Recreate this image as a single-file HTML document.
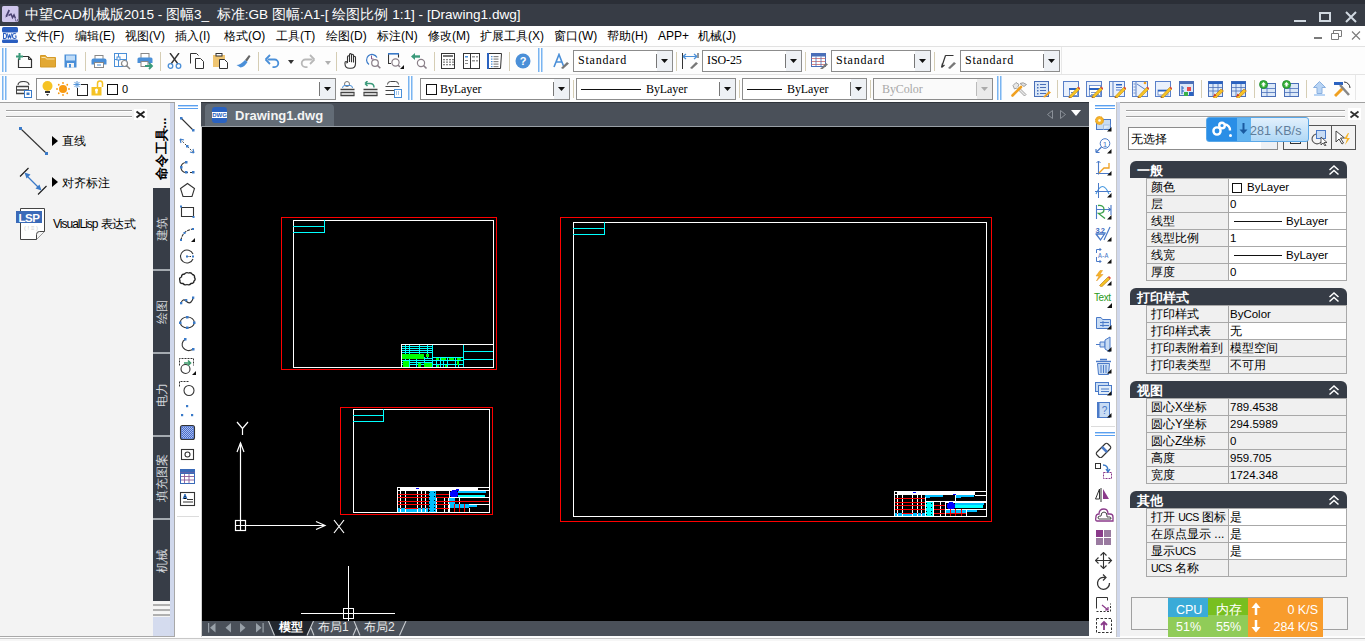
<!DOCTYPE html>
<html><head><meta charset="utf-8">
<style>
*{box-sizing:border-box;margin:0;padding:0}
html,body{width:1365px;height:641px;overflow:hidden;background:#f0f0f0;font-family:"Liberation Sans",sans-serif;font-size:12px;color:#000}
.a{position:absolute}
.tt{color:#fff;font-size:13.6px;white-space:nowrap;line-height:16px}
.tbf{font-family:"Liberation Serif",serif;font-size:12px;line-height:21px;letter-spacing:0.8px;white-space:nowrap}
.tbs{font-family:"Liberation Serif",serif;font-size:12px;line-height:23px;letter-spacing:-0.1px;white-space:nowrap}
.lpt{font-size:12px;line-height:16px;white-space:nowrap}
.vt{background:#373d47;overflow:hidden}
.vt span{position:absolute;left:50%;top:50%;transform:translate(-50%,-50%) rotate(-90deg);white-space:nowrap;color:#d4d8dc;font-size:12px;line-height:14px}
.vt.act{background:transparent}
.vt.act span{color:#000;font-weight:bold;font-size:13px;top:calc(50% + 3px)}
.pk{font-size:12px;line-height:18px;white-space:nowrap}
.pv{font-size:11.5px;line-height:18px;white-space:nowrap}
.cw{font-size:12.5px;line-height:16px;color:#fff;white-space:nowrap}
.u{font-size:10.5px;letter-spacing:-0.6px}
.mn{top:28px;font-size:12px;line-height:16px;white-space:nowrap;color:#000}
</style></head><body>
<!-- TITLE BAR -->
<div class="a" style="left:0;top:0;width:1365px;height:26px;background:#373c45;border-top:4px solid #2b2f37"></div>
<svg class="a" style="left:2px;top:6px" width="17" height="16" viewBox="0 0 17 16">
 <rect x="0" y="0" width="16.5" height="16" rx="1.5" fill="#cfc6ec"/>
 <path d="M6.5 3.5L8 4.5L5 11L3.5 10z" fill="#4a4272"/><path d="M3 11.5l1.5-2 1 1z" fill="#4a4272"/>
 <path d="M6.5 9.5L9 8L10.5 11.5L12 9L13.5 12.5" stroke="#4a4272" stroke-width="1.5" fill="none"/>
 <path d="M13.5 13v2h2v-2" stroke="#6a6290" stroke-width="0.8" fill="none"/>
</svg>
<div class="a tt" style="left:25px;top:7px;">中望CAD机械版2015 - 图幅3_ &nbsp;标准:GB 图幅:A1-[ 绘图比例 1:1] - [Drawing1.dwg]</div>
<div class="a" style="left:1294px;top:20px;width:12px;height:2px;background:#d0d8e0"></div>
<div class="a" style="left:1319px;top:12px;width:12px;height:10px;border:2px solid #d0d8e0"></div>
<svg class="a" style="left:1345px;top:11px" width="12" height="12" viewBox="0 0 12 12"><path d="M1 1L11 11M11 1L1 11" stroke="#d0d8e0" stroke-width="2"/></svg>
<!-- MENU -->
<div class="a" style="left:0;top:26px;width:1365px;height:21px;background:#fff;border-bottom:1px solid #e2e2e2"></div>
<svg class="a" style="left:2px;top:27px" width="16" height="16" viewBox="0 0 16 16">
 <rect x="0" y="0" width="16" height="5.5" rx="1.5" fill="#2a5ec0"/>
 <rect x="0" y="12.5" width="16" height="3.5" rx="1.2" fill="#2a5ec0"/>
 <path d="M1.5 6.5v5h1.5q1.5 0 1.5-2.5t-1.5-2.5z M5.5 6.5l0.8 5 1.2-3.5 1.2 3.5 0.8-5 M14 7q-0.5-0.5-1.5-0.5q-2 0-2 2.5t2 2.5q1 0 1.5-0.5v-2h-1.2" stroke="#2a5ec0" stroke-width="1.05" fill="none"/>
</svg>
<div class="a mn" style="left:25px">文件(F)</div>
<div class="a mn" style="left:75px">编辑(E)</div>
<div class="a mn" style="left:125px">视图(V)</div>
<div class="a mn" style="left:175px">插入(I)</div>
<div class="a mn" style="left:224px">格式(O)</div>
<div class="a mn" style="left:276px">工具(T)</div>
<div class="a mn" style="left:326px">绘图(D)</div>
<div class="a mn" style="left:377px">标注(N)</div>
<div class="a mn" style="left:428px">修改(M)</div>
<div class="a mn" style="left:480px">扩展工具(X)</div>
<div class="a mn" style="left:554px">窗口(W)</div>
<div class="a mn" style="left:607px">帮助(H)</div>
<div class="a mn" style="left:658px">APP+</div>
<div class="a mn" style="left:698px">机械(J)</div>
<div class="a" style="left:1314px;top:37px;width:8px;height:2px;background:#7a7a7a"></div>
<svg class="a" style="left:1331px;top:30px" width="11" height="10" viewBox="0 0 11 10"><path d="M0.5 3.5h7v6h-7z M2.5 3.5v-3h8v6h-3" stroke="#7a7a7a" fill="none"/></svg>
<svg class="a" style="left:1351px;top:31px" width="10" height="9" viewBox="0 0 10 9"><path d="M1 0.5L9 8.5M9 0.5L1 8.5" stroke="#7a7a7a" stroke-width="1.1"/></svg>
<div class="a" style="left:0px;top:47px;width:1365px;height:27px;background:#fdfdfd;"></div>
<div class="a" style="left:0px;top:74px;width:1365px;height:1px;background:#e4e4e4;"></div>
<div class="a" style="left:0px;top:75px;width:1365px;height:27px;background:#fdfdfd;"></div>
<div class="a" style="left:1061px;top:47px;width:1px;height:27px;background:#e8e8e8;"></div>
<div class="a" style="left:1355px;top:75px;width:1px;height:25px;background:#e8e8e8;"></div>
<div class="a" style="left:2px;top:48px;width:1px;height:24px;background:#7ab4f0;"></div>
<div class="a" style="left:5px;top:48px;width:1px;height:24px;background:#7ab4f0;"></div>
<div class="a" style="left:3px;top:48px;width:1px;height:24px;background:#b8d8f8;"></div>
<div class="a" style="left:6px;top:48px;width:1px;height:24px;background:#b8d8f8;"></div>
<div class="a" style="left:2px;top:76px;width:1px;height:24px;background:#7ab4f0;"></div>
<div class="a" style="left:5px;top:76px;width:1px;height:24px;background:#7ab4f0;"></div>
<div class="a" style="left:3px;top:76px;width:1px;height:24px;background:#b8d8f8;"></div>
<div class="a" style="left:6px;top:76px;width:1px;height:24px;background:#b8d8f8;"></div>
<div class="a" style="left:538px;top:48px;width:1px;height:24px;background:#7ab4f0;"></div>
<div class="a" style="left:541px;top:48px;width:1px;height:24px;background:#7ab4f0;"></div>
<div class="a" style="left:539px;top:48px;width:1px;height:24px;background:#b8d8f8;"></div>
<div class="a" style="left:542px;top:48px;width:1px;height:24px;background:#b8d8f8;"></div>
<div class="a" style="left:408px;top:76px;width:1px;height:24px;background:#7ab4f0;"></div>
<div class="a" style="left:411px;top:76px;width:1px;height:24px;background:#7ab4f0;"></div>
<div class="a" style="left:409px;top:76px;width:1px;height:24px;background:#b8d8f8;"></div>
<div class="a" style="left:412px;top:76px;width:1px;height:24px;background:#b8d8f8;"></div>
<div class="a" style="left:997px;top:76px;width:1px;height:24px;background:#7ab4f0;"></div>
<div class="a" style="left:1000px;top:76px;width:1px;height:24px;background:#7ab4f0;"></div>
<div class="a" style="left:998px;top:76px;width:1px;height:24px;background:#b8d8f8;"></div>
<div class="a" style="left:1001px;top:76px;width:1px;height:24px;background:#b8d8f8;"></div>
<div class="a" style="left:85px;top:52px;width:1px;height:19px;background:#d5cdb4;"></div>
<div class="a" style="left:160px;top:52px;width:1px;height:19px;background:#d5cdb4;"></div>
<div class="a" style="left:258px;top:52px;width:1px;height:19px;background:#d5cdb4;"></div>
<div class="a" style="left:336px;top:52px;width:1px;height:19px;background:#d5cdb4;"></div>
<div class="a" style="left:434px;top:52px;width:1px;height:19px;background:#d5cdb4;"></div>
<div class="a" style="left:509px;top:52px;width:1px;height:19px;background:#d5cdb4;"></div>
<div class="a" style="left:676px;top:52px;width:1px;height:19px;background:#d5cdb4;"></div>
<div class="a" style="left:805px;top:52px;width:1px;height:19px;background:#d5cdb4;"></div>
<div class="a" style="left:934px;top:52px;width:1px;height:19px;background:#d5cdb4;"></div>
<div class="a" style="left:573px;top:80px;width:1px;height:18px;background:#d5cdb4;"></div>
<div class="a" style="left:739px;top:80px;width:1px;height:18px;background:#d5cdb4;"></div>
<div class="a" style="left:870px;top:80px;width:1px;height:18px;background:#d5cdb4;"></div>
<div class="a" style="left:1057px;top:80px;width:1px;height:18px;background:#d5cdb4;"></div>
<div class="a" style="left:1201px;top:80px;width:1px;height:18px;background:#d5cdb4;"></div>
<div class="a" style="left:1254px;top:80px;width:1px;height:18px;background:#d5cdb4;"></div>
<div class="a" style="left:1306px;top:80px;width:1px;height:18px;background:#d5cdb4;"></div>
<svg class="a" style="left:16px;top:53px" width="17" height="16" viewBox="0 0 17 16"><path d="M2.5 5.5v9h13v-8l-3-3h-6" stroke="#333" fill="none" stroke-width="1.2"/><path d="M12.5 3.5v3h3" stroke="#333" fill="none"/><path d="M3.5 0v7M0 3.5h7" stroke="#3a9a7a" stroke-width="2"/></svg>
<svg class="a" style="left:40px;top:53px" width="16" height="16" viewBox="0 0 16 16"><path d="M0.5 2.5h5l1.5 2h8.5v9.5h-15z" fill="#e2a833" stroke="#d49a28"/><path d="M1.5 4.5h4l1 1.5h8" stroke="#fbe3a8" fill="none"/></svg>
<svg class="a" style="left:64px;top:54px" width="13" height="14" viewBox="0 0 13 14"><rect x="0.5" y="0.5" width="12" height="13" fill="#4a8fd8"/><rect x="2" y="1.5" width="9" height="5" fill="#bfdcf8"/><rect x="3" y="9" width="7" height="4.5" fill="#f4f4f4"/><rect x="5" y="10" width="2" height="3.5" fill="#4a8fd8"/></svg>
<svg class="a" style="left:91px;top:53px" width="16" height="16" viewBox="0 0 16 16"><rect x="4" y="2.5" width="8" height="4" fill="#fff" stroke="#888"/><path d="M0.5 7.5q0-2 2-2h11q2 0 2 2v4h-15z" fill="#4a8fd8"/><rect x="3.5" y="9.5" width="9" height="5" fill="#fff" stroke="#888"/><rect x="6" y="11.5" width="4" height="1" fill="#4a8fd8"/></svg>
<svg class="a" style="left:114px;top:53px" width="17" height="17" viewBox="0 0 17 17"><rect x="0.5" y="0.5" width="12" height="13" fill="none" stroke="#4a8fd8"/><path d="M4.5 0.5v13M0.5 6.5h12" stroke="#4a8fd8"/><rect x="3" y="4" width="3" height="3" fill="#fff" stroke="#4a8fd8"/><circle cx="10.5" cy="10.5" r="3" fill="#fff" stroke="#888" stroke-width="1.2"/><path d="M12.5 12.5l3.5 3.5" stroke="#888" stroke-width="1.5"/></svg>
<svg class="a" style="left:137px;top:53px" width="17" height="17" viewBox="0 0 17 17"><rect x="4" y="0.5" width="8" height="5" fill="#fff" stroke="#888"/><path d="M0.5 6q0-1.5 1.5-1.5h12q1.5 0 1.5 1.5v4h-15z" fill="#4a8fd8"/><rect x="4" y="8.5" width="7" height="5" fill="#fff" stroke="#888"/><path d="M8 13h7M12 10l3 3-3 3" stroke="#3a9a7a" stroke-width="1.8" fill="none"/></svg>
<svg class="a" style="left:167px;top:53px" width="15" height="16" viewBox="0 0 15 16"><path d="M3 0l8 11M12 0l-8 11" stroke="#333" stroke-width="1.4"/><circle cx="3.5" cy="13" r="2.3" fill="none" stroke="#4a8fd8" stroke-width="1.3"/><circle cx="11.5" cy="13" r="2.3" fill="none" stroke="#4a8fd8" stroke-width="1.3"/></svg>
<svg class="a" style="left:190px;top:53px" width="15" height="16" viewBox="0 0 15 16"><path d="M0.5 10.5v-10h6l2 2" fill="none" stroke="#333"/><path d="M5.5 5.5h5l3 3v7h-8z" fill="#fff" stroke="#333"/></svg>
<svg class="a" style="left:213px;top:53px" width="15" height="16" viewBox="0 0 15 16"><rect x="0" y="2" width="12" height="12" fill="#efc572"/><rect x="3" y="0.5" width="6" height="2.5" fill="#fff" stroke="#333"/><path d="M6.5 6.5h5l3 3v6h-8z" fill="#fff" stroke="#333"/></svg>
<svg class="a" style="left:236px;top:53px" width="15" height="16" viewBox="0 0 15 16"><path d="M9 7l4-5 1.5 1.2-3.5 5.3z" fill="#666"/><path d="M0.5 12q4 0 8.5-5l2.5 2q-3 5-7 5.5z" fill="#4a8fd8"/></svg>
<svg class="a" style="left:265px;top:53px" width="15" height="16" viewBox="0 0 15 16"><path d="M2.5 6.5h7a3.8 3.8 0 0 1 0 7.6h-2" stroke="#4a8fd8" stroke-width="1.8" fill="none"/><path d="M0.5 6.5l4.5-4.5M0.5 6.5l4.5 4.5" stroke="#4a8fd8" stroke-width="1.8"/></svg>
<svg class="a" style="left:288px;top:60px" width="6" height="4" viewBox="0 0 6 4"><path d="M0 0h6l-3 4z" fill="#333"/></svg>
<svg class="a" style="left:300px;top:53px" width="15" height="16" viewBox="0 0 15 16"><path d="M12.5 6.5h-7a3.8 3.8 0 0 0 0 7.6h2" stroke="#b8b8b8" stroke-width="1.8" fill="none"/><path d="M14.5 6.5l-4.5-4.5M14.5 6.5l-4.5 4.5" stroke="#b8b8b8" stroke-width="1.8"/></svg>
<svg class="a" style="left:325px;top:61px" width="6" height="4" viewBox="0 0 6 4"><path d="M0 0h6l-3 4z" fill="#b0b0b0"/></svg>
<svg class="a" style="left:344px;top:53px" width="14" height="16" viewBox="0 0 14 16"><path d="M3.5 9.5V4q0-1.2 1-1.2t1 1.2v5V1.8q0-1.2 1-1.2t1 1.2v7.5V2.5q0-1.2 1-1.2t1 1.2v7V4.5q0-1.2 1-1.2t1 1.2v6q0 4.8-4.5 4.8h-1.5q-4.5 0-4.5-4.5v-1q0-1.3 1-1.3t1 1.3z" fill="#fff" stroke="#333" stroke-width="1.1"/></svg>
<svg class="a" style="left:365px;top:53px" width="16" height="16" viewBox="0 0 16 16"><path d="M4 11.5A5.5 5.5 0 1 1 12 4.5" stroke="#3a7ac8" stroke-width="1.2" fill="none"/><path d="M6.5 2.5v3.5h2" stroke="#8a5a8a" stroke-width="1" fill="none"/><circle cx="10" cy="10" r="3.3" fill="#fff" stroke="#8a7f88" stroke-width="1.2"/><path d="M12.3 12.3l3 3" stroke="#8a7f88" stroke-width="1.6"/></svg>
<svg class="a" style="left:388px;top:53px" width="17" height="17" viewBox="0 0 17 17"><path d="M0.5 1v9.5h2.5M10.5 1v3.5" stroke="#333" fill="none" stroke-width="1.1"/><rect x="0" y="0" width="11" height="1.6" fill="#3a7ac8"/><circle cx="7.5" cy="9.5" r="3.6" fill="#fff" stroke="#8a7f88" stroke-width="1.2"/><path d="M10 12l2 2" stroke="#8a7f88" stroke-width="1.6"/><path d="M16 12v4h-4z" fill="#111"/></svg>
<svg class="a" style="left:411px;top:53px" width="17" height="17" viewBox="0 0 17 17"><path d="M3 3.5h6" stroke="#3a9a7a" stroke-width="2.4"/><path d="M0 3.5l4-3.5v7z" fill="#3a9a7a"/><circle cx="10" cy="10" r="3.6" fill="#fff" stroke="#8a7f88" stroke-width="1.2"/><path d="M12.5 12.5l3 3" stroke="#8a7f88" stroke-width="1.6"/></svg>
<svg class="a" style="left:441px;top:53px" width="14" height="16" viewBox="0 0 14 16"><rect x="0.5" y="0.5" width="13" height="15" fill="#fff" stroke="#333"/><rect x="2" y="2" width="10" height="2" fill="#777"/><rect x="2" y="6.0" width="2" height="1.3" fill="#888"/><rect x="2" y="8.5" width="2" height="1.3" fill="#888"/><rect x="2" y="11.0" width="2" height="1.3" fill="#888"/><rect x="5" y="6.0" width="2" height="1.3" fill="#888"/><rect x="5" y="8.5" width="2" height="1.3" fill="#888"/><rect x="5" y="11.0" width="2" height="1.3" fill="#888"/><rect x="8" y="6.0" width="2" height="1.3" fill="#888"/><rect x="8" y="8.5" width="2" height="1.3" fill="#888"/><rect x="8" y="11.0" width="2" height="1.3" fill="#888"/><rect x="11" y="6.0" width="2" height="1.3" fill="#888"/><rect x="11" y="8.5" width="2" height="1.3" fill="#888"/><rect x="11" y="11.0" width="2" height="1.3" fill="#888"/></svg>
<svg class="a" style="left:463px;top:53px" width="17" height="16" viewBox="0 0 17 16"><rect x="0.5" y="0.5" width="16" height="15" fill="#fff" stroke="#333"/><path d="M7.5 0.5v15" stroke="#333"/><rect x="2" y="3" width="3" height="1.5" fill="#4a8fd8"/><rect x="9" y="3" width="3" height="1.5" fill="#999"/><rect x="13" y="3" width="2" height="1.5" fill="#999"/><rect x="9" y="7" width="3" height="1.5" fill="#999"/><rect x="13" y="7" width="2" height="1.5" fill="#999"/><rect x="2" y="7" width="3" height="1" fill="#888"/><rect x="2" y="10" width="3" height="1" fill="#888"/></svg>
<svg class="a" style="left:487px;top:53px" width="15" height="16" viewBox="0 0 15 16"><path d="M0.5 0.5h14l-1 15h-13z" fill="#fff" stroke="#333"/><rect x="0" y="0" width="2" height="16" fill="#2a62c0"/><rect x="4" y="3.0" width="1.5" height="1.2" fill="#4a8fd8"/><rect x="6.5" y="3.0" width="5" height="1.2" fill="#888"/><rect x="4" y="5.5" width="1.5" height="1.2" fill="#4a8fd8"/><rect x="6.5" y="5.5" width="5" height="1.2" fill="#888"/><rect x="4" y="8.0" width="1.5" height="1.2" fill="#4a8fd8"/><rect x="6.5" y="8.0" width="5" height="1.2" fill="#888"/><rect x="4" y="10.5" width="1.5" height="1.2" fill="#4a8fd8"/><rect x="6.5" y="10.5" width="5" height="1.2" fill="#888"/><rect x="4" y="13.0" width="1.5" height="1.2" fill="#4a8fd8"/><rect x="6.5" y="13.0" width="5" height="1.2" fill="#888"/></svg>
<svg class="a" style="left:515px;top:53px" width="16" height="16" viewBox="0 0 16 16"><circle cx="8" cy="8" r="7.5" fill="#4a8fd8"/><text x="8" y="12.3" font-family="Liberation Sans" font-size="11" font-weight="bold" fill="#fff" text-anchor="middle">?</text></svg>
<svg class="a" style="left:553px;top:53px" width="17" height="16" viewBox="0 0 17 16"><path d="M1 14L6 1.5L10.5 13M3 9h6" stroke="#4a8fd8" stroke-width="1.6" fill="none"/><path d="M8 15l6-6 2 1.5-6 5.5z" fill="#777"/></svg>
<svg class="a" style="left:682px;top:53px" width="17" height="16" viewBox="0 0 17 16"><path d="M0.5 0v16M16 0v5" stroke="#333"/><path d="M1 3.5h14M1 3.5l3-2.5M1 3.5l3 2.5M15 3.5l-3-2.5M15 3.5l-3 2.5" stroke="#4a8fd8" stroke-width="1.2"/><path d="M8 15l6-6 2 1.5-6 5.5z" fill="#777"/></svg>
<svg class="a" style="left:811px;top:53px" width="17" height="16" viewBox="0 0 17 16"><rect x="0.5" y="0.5" width="14" height="13" fill="#fff" stroke="#4a6fb8"/><rect x="0.5" y="0.5" width="14" height="3" fill="#4a6fb8"/><path d="M0.5 5.5h14" stroke="#c66" stroke-width="0.8"/><path d="M0.5 8.5h14" stroke="#c66" stroke-width="0.8"/><path d="M0.5 11.5h14" stroke="#c66" stroke-width="0.8"/><path d="M5 3.5v10M10 3.5v10" stroke="#4a6fb8" stroke-width="0.8"/><path d="M9 16l6-6 2 1.5-6 5z" fill="#777"/></svg>
<svg class="a" style="left:940px;top:53px" width="17" height="16" viewBox="0 0 17 16"><path d="M5.5 2.5h8M5.5 2.5l-4 12M1.5 14.5l1-4M1.5 14.5l3-2.5" stroke="#333" stroke-width="1.2" fill="none"/><path d="M8 15l6-6 2 1.5-6 5.5z" fill="#777"/></svg>
<div class="a" style="left:573px;top:50px;width:100px;height:22px;border:1px solid #8c8c8c;background:#fff"></div>
<div class="a" style="left:657px;top:51px;width:15px;height:20px;background:#eef1f5"></div>
<div class="a" style="left:656px;top:54px;width:1px;height:14px;background:#777"></div>
<svg class="a" style="left:661px;top:59px" width="7" height="4" viewBox="0 0 7 4"><path d="M0 0h7l-3.5 4z" fill="#111"/></svg>
<div class="a tbf" style="left:578px;top:50px;height:22px;color:#000">Standard</div>
<div class="a" style="left:702px;top:50px;width:100px;height:22px;border:1px solid #8c8c8c;background:#fff"></div>
<div class="a" style="left:786px;top:51px;width:15px;height:20px;background:#eef1f5"></div>
<div class="a" style="left:785px;top:54px;width:1px;height:14px;background:#777"></div>
<svg class="a" style="left:790px;top:59px" width="7" height="4" viewBox="0 0 7 4"><path d="M0 0h7l-3.5 4z" fill="#111"/></svg>
<div class="a tbf" style="left:707px;top:50px;height:22px;color:#000"><span style="letter-spacing:-0.1px">ISO-25</span></div>
<div class="a" style="left:831px;top:50px;width:100px;height:22px;border:1px solid #8c8c8c;background:#fff"></div>
<div class="a" style="left:915px;top:51px;width:15px;height:20px;background:#eef1f5"></div>
<div class="a" style="left:914px;top:54px;width:1px;height:14px;background:#777"></div>
<svg class="a" style="left:919px;top:59px" width="7" height="4" viewBox="0 0 7 4"><path d="M0 0h7l-3.5 4z" fill="#111"/></svg>
<div class="a tbf" style="left:836px;top:50px;height:22px;color:#000">Standard</div>
<div class="a" style="left:960px;top:50px;width:100px;height:22px;border:1px solid #8c8c8c;background:#fff"></div>
<div class="a" style="left:1044px;top:51px;width:15px;height:20px;background:#eef1f5"></div>
<div class="a" style="left:1043px;top:54px;width:1px;height:14px;background:#777"></div>
<svg class="a" style="left:1048px;top:59px" width="7" height="4" viewBox="0 0 7 4"><path d="M0 0h7l-3.5 4z" fill="#111"/></svg>
<div class="a tbf" style="left:965px;top:50px;height:22px;color:#000">Standard</div>
<svg class="a" style="left:15px;top:81px" width="17" height="17" viewBox="0 0 17 17"><path d="M3 4q0-3.5 5.5-3.5t5.5 3.5" stroke="#444" fill="none" stroke-width="1.1"/><path d="M1 5.5h13M1 9h13M1 12.5h9" stroke="#444" stroke-width="1.3"/><path d="M1.5 5.5v7M13.5 5.5v3" stroke="#444" stroke-width="1"/><rect x="9.5" y="9.5" width="7" height="7" fill="#fff" stroke="#3a7ac8"/><rect x="11.5" y="11.5" width="3" height="2.5" fill="#3a7ac8"/></svg>
<div class="a" style="left:36px;top:78px;width:300px;height:22px;border:1px solid #8c8c8c;background:#fff"></div>
<div class="a" style="left:320px;top:79px;width:15px;height:20px;background:#eef1f5"></div>
<div class="a" style="left:319px;top:82px;width:1px;height:14px;background:#777"></div>
<svg class="a" style="left:324px;top:87px" width="7" height="4" viewBox="0 0 7 4"><path d="M0 0h7l-3.5 4z" fill="#111"/></svg>
<svg class="a" style="left:42px;top:81px" width="11" height="15" viewBox="0 0 11 15"><circle cx="5.5" cy="5" r="5" fill="#f6c324"/><path d="M3 10h5v2h-5z M4 13h3l-1.5 2z" fill="#333"/></svg>
<svg class="a" style="left:56px;top:82px" width="14" height="14" viewBox="0 0 14 14"><circle cx="7" cy="7" r="4" fill="#f89a12"/><circle cx="13.0" cy="7.0" r="0.9" fill="#f89a12"/><circle cx="11.242641380355892" cy="11.242639993882566" r="0.9" fill="#f89a12"/><circle cx="7.000001960769379" cy="12.99999999999968" r="0.9" fill="#f89a12"/><circle cx="2.7573613925912106" cy="11.24264276682876" r="0.9" fill="#f89a12"/><circle cx="1.0000000000012816" cy="7.000003921538759" r="0.9" fill="#f89a12"/><circle cx="2.757355846698819" cy="2.757362779065442" r="0.9" fill="#f89a12"/><circle cx="6.999994117691865" cy="1.000000000002884" r="0.9" fill="#f89a12"/><circle cx="11.242635834459875" cy="2.757354460226856" r="0.9" fill="#f89a12"/></svg>
<svg class="a" style="left:73px;top:81px" width="15" height="15" viewBox="0 0 15 15"><rect x="4.5" y="3.5" width="10" height="11" fill="none" stroke="#222"/><rect x="0" y="0" width="8" height="7" fill="#fcfcfc"/><path d="M4 0v7M0.5 3.5h7M1.5 1l5 5M6.5 1l-5 5" stroke="#4a8fd8" stroke-width="0.9"/></svg>
<svg class="a" style="left:91px;top:80px" width="13" height="16" viewBox="0 0 13 16"><rect x="0.5" y="7" width="10" height="8.5" fill="#f6c324"/><path d="M6.5 7V3.5a2.5 2.5 0 0 1 5 0V7" stroke="#f6c324" stroke-width="1.5" fill="none"/><path d="M5.5 9.5v4" stroke="#fff" stroke-width="2"/><circle cx="5.5" cy="10" r="1.5" fill="#fff"/></svg>
<svg class="a" style="left:107px;top:84px" width="11" height="11" viewBox="0 0 11 11"><rect x="0.5" y="0.5" width="10" height="10" fill="#fff" stroke="#111"/></svg>
<div class="a" style="left:122px;top:81px;font-size:11px;line-height:16px">0</div>
<svg class="a" style="left:340px;top:81px" width="15" height="16" viewBox="0 0 15 16"><circle cx="7" cy="3" r="2.5" fill="#fff" stroke="#777"/><path d="M2.5 7q0-2.5 2.5-2.5h5q2.5 0 2.5 2.5" stroke="#4a8fd8" fill="none"/><path d="M0.5 8.5h14M0.5 11.5h14M0.5 14.5h14" stroke="#444" stroke-width="1.3"/><path d="M1 11.5v3M14 11.5v3" stroke="#444"/></svg>
<svg class="a" style="left:363px;top:81px" width="15" height="16" viewBox="0 0 15 16"><path d="M7 2.5h-5M2 2.5l2.5-2.5M2 2.5l2.5 2.5" stroke="#3a9a7a" stroke-width="1.5"/><path d="M7 2.5q4 0 4 4" stroke="#3a9a7a" stroke-width="1.5" fill="none"/><path d="M0.5 8.5h14M0.5 11.5h14M0.5 14.5h14" stroke="#444" stroke-width="1.3"/><path d="M1 11.5v3M14 11.5v3" stroke="#444"/></svg>
<svg class="a" style="left:385px;top:81px" width="17" height="17" viewBox="0 0 17 17"><path d="M2.5 3.5q0-3 3-3h5q3 0 3 3" stroke="#444" fill="none"/><path d="M0.5 5.5h14M0.5 9.5h10M0.5 13.5h9" stroke="#444" stroke-width="1.2"/><rect x="9.5" y="8.5" width="7" height="8" fill="#fff" stroke="#4a8fd8"/><path d="M11 11h4M11 13h4" stroke="#4a8fd8" stroke-dasharray="1 1"/></svg>
<div class="a" style="left:420px;top:78px;width:150px;height:22px;border:1px solid #8c8c8c;background:#fff"></div>
<div class="a" style="left:554px;top:79px;width:15px;height:20px;background:#eef1f5"></div>
<div class="a" style="left:553px;top:82px;width:1px;height:14px;background:#777"></div>
<svg class="a" style="left:558px;top:87px" width="7" height="4" viewBox="0 0 7 4"><path d="M0 0h7l-3.5 4z" fill="#111"/></svg>
<svg class="a" style="left:426px;top:84px" width="11" height="11" viewBox="0 0 11 11"><rect x="0.5" y="0.5" width="10" height="10" fill="#fff" stroke="#111"/></svg>
<div class="a tbs" style="left:440px;top:78px;height:22px">ByLayer</div>
<div class="a" style="left:576px;top:78px;width:160px;height:22px;border:1px solid #8c8c8c;background:#fff"></div>
<div class="a" style="left:720px;top:79px;width:15px;height:20px;background:#eef1f5"></div>
<div class="a" style="left:719px;top:82px;width:1px;height:14px;background:#777"></div>
<svg class="a" style="left:724px;top:87px" width="7" height="4" viewBox="0 0 7 4"><path d="M0 0h7l-3.5 4z" fill="#111"/></svg>
<div class="a" style="left:581px;top:89px;width:60px;height:1px;background:#111;"></div>
<div class="a tbs" style="left:646px;top:78px;height:22px">ByLayer</div>
<div class="a" style="left:742px;top:78px;width:125px;height:22px;border:1px solid #8c8c8c;background:#fff"></div>
<div class="a" style="left:851px;top:79px;width:15px;height:20px;background:#eef1f5"></div>
<div class="a" style="left:850px;top:82px;width:1px;height:14px;background:#777"></div>
<svg class="a" style="left:855px;top:87px" width="7" height="4" viewBox="0 0 7 4"><path d="M0 0h7l-3.5 4z" fill="#111"/></svg>
<div class="a" style="left:747px;top:89px;width:35px;height:1px;background:#111;"></div>
<div class="a tbs" style="left:787px;top:78px;height:22px">ByLayer</div>
<div class="a" style="left:873px;top:78px;width:120px;height:22px;border:1px solid #8c8c8c;background:#fafafa"></div>
<div class="a" style="left:977px;top:79px;width:15px;height:20px;background:#eaeaea"></div>
<div class="a" style="left:976px;top:82px;width:1px;height:14px;background:#bbb"></div>
<svg class="a" style="left:981px;top:87px" width="7" height="4" viewBox="0 0 7 4"><path d="M0 0h7l-3.5 4z" fill="#aaa"/></svg>
<div class="a tbs" style="left:882px;top:78px;height:22px;color:#a8a8a8">ByColor</div>
<svg class="a" style="left:1011px;top:81px" width="17" height="17" viewBox="0 0 17 17"><path d="M2 4.5L5 1.5L8 3.5L7 5.5L15 13.5L13.5 15L5.5 7L3.5 8z" fill="#e8e8e8" stroke="#999" stroke-width="0.9"/><path d="M9 2.5Q12 0.5 15.5 3.5L13 5.5L11.5 4.5z" fill="#ddd" stroke="#999" stroke-width="0.9"/><path d="M1.5 14.5L10 6" stroke="#f0a020" stroke-width="2.6" stroke-linecap="round"/></svg>
<svg class="a" style="left:1034px;top:81px" width="17" height="17" viewBox="0 0 17 17"><rect x="0.5" y="0.5" width="14" height="15" fill="#dbe8f8" stroke="#4a6fb8"/><rect x="3" y="3" width="1.5" height="1.5" fill="#4a6fb8"/><rect x="6" y="3" width="6" height="1" fill="#4a6fb8"/><rect x="3" y="6" width="1.5" height="1.5" fill="#4a6fb8"/><rect x="6" y="6" width="6" height="1" fill="#4a6fb8"/><rect x="3" y="9" width="1.5" height="1.5" fill="#4a6fb8"/><rect x="6" y="9" width="6" height="1" fill="#4a6fb8"/><rect x="3" y="12" width="1.5" height="1.5" fill="#4a6fb8"/><rect x="6" y="12" width="6" height="1" fill="#4a6fb8"/><path d="M9 16l6-6 2 1.5-6 5z" fill="#f0a020"/></svg>
<svg class="a" style="left:1063px;top:81px" width="17" height="17" viewBox="0 0 17 17"><rect x="0.5" y="0.5" width="15" height="15" fill="#eaf1fc" stroke="#5a80c8"/><rect x="6.5" y="7.5" width="8" height="7" fill="#fff" stroke="#5a80c8" stroke-width="0.8"/><rect x="6" y="7" width="9" height="2" fill="#2a62c0"/><path d="M8 11.5h5" stroke="#5a80c8"/><path d="M6 15.5L14.5 6.5L16.5 8.5L8 17z" fill="#f6c324" stroke="#c08a10" stroke-width="0.6"/><path d="M14.5 6.5l1-1 2 2-1 1z" fill="#e04a3a"/><path d="M6 15.5L5.5 17L8 17z" fill="#a05a20"/></svg>
<svg class="a" style="left:1086px;top:81px" width="17" height="17" viewBox="0 0 17 17"><rect x="0.5" y="0.5" width="15" height="15" fill="#eaf1fc" stroke="#5a80c8"/><rect x="3.5" y="4.5" width="11" height="10" fill="#fff" stroke="#5a80c8" stroke-width="0.8"/><rect x="3" y="7" width="12" height="2" fill="#2a62c0"/><path d="M5 11.5h8M5 13.5h8" stroke="#5a80c8" stroke-width="0.8"/><path d="M6 15.5L14.5 6.5L16.5 8.5L8 17z" fill="#f6c324" stroke="#c08a10" stroke-width="0.6"/><path d="M14.5 6.5l1-1 2 2-1 1z" fill="#e04a3a"/><path d="M6 15.5L5.5 17L8 17z" fill="#a05a20"/></svg>
<svg class="a" style="left:1109px;top:81px" width="17" height="17" viewBox="0 0 17 17"><rect x="0.5" y="0.5" width="15" height="15" fill="#eaf1fc" stroke="#5a80c8"/><path d="M4 0.5v15" stroke="#5a80c8"/><rect x="7" y="3" width="6" height="1.5" fill="#2a62c0"/><path d="M7 6.5h6M7 9h6" stroke="#5a80c8"/><path d="M6 15.5L14.5 6.5L16.5 8.5L8 17z" fill="#f6c324" stroke="#c08a10" stroke-width="0.6"/><path d="M14.5 6.5l1-1 2 2-1 1z" fill="#e04a3a"/><path d="M6 15.5L5.5 17L8 17z" fill="#a05a20"/></svg>
<svg class="a" style="left:1132px;top:81px" width="17" height="17" viewBox="0 0 17 17"><rect x="0.5" y="0.5" width="15" height="15" fill="#eaf1fc" stroke="#5a80c8"/><path d="M4 0.5v15" stroke="#5a80c8"/><path d="M1.5 3h2M1.5 6h2M1.5 9h2M1.5 12h2" stroke="#5a80c8" stroke-width="0.8"/><path d="M5 3l9 6" stroke="#5a80c8"/><circle cx="13" cy="2" r="1.3" fill="#f0a020"/><path d="M6 15.5L14.5 6.5L16.5 8.5L8 17z" fill="#f6c324" stroke="#c08a10" stroke-width="0.6"/><path d="M14.5 6.5l1-1 2 2-1 1z" fill="#e04a3a"/><path d="M6 15.5L5.5 17L8 17z" fill="#a05a20"/></svg>
<svg class="a" style="left:1155px;top:81px" width="17" height="17" viewBox="0 0 17 17"><rect x="0.5" y="0.5" width="15" height="15" fill="#eaf1fc" stroke="#5a80c8"/><rect x="3" y="9" width="10" height="5" fill="#fff" stroke="#5a80c8" stroke-width="0.8"/><rect x="3" y="9" width="10" height="1.5" fill="#2a62c0"/><path d="M6 15.5L14.5 6.5L16.5 8.5L8 17z" fill="#f6c324" stroke="#c08a10" stroke-width="0.6"/><path d="M14.5 6.5l1-1 2 2-1 1z" fill="#e04a3a"/><path d="M6 15.5L5.5 17L8 17z" fill="#a05a20"/></svg>
<svg class="a" style="left:1179px;top:81px" width="16" height="16" viewBox="0 0 16 16"><rect x="0.5" y="0.5" width="14" height="14" fill="#dbe8f8" stroke="#4a6fb8"/><rect x="0.5" y="0.5" width="14" height="2.5" fill="#4a6fb8"/><path d="M3 5v8M3 7h2M3 10h2" stroke="#2a62c0"/><rect x="8" y="6" width="4" height="4" fill="#e84a4a"/><rect x="5" y="11" width="4" height="4" fill="#3ab04a"/><rect x="10" y="11" width="4" height="4" fill="#2a62c0"/></svg>
<svg class="a" style="left:1208px;top:81px" width="17" height="17" viewBox="0 0 17 17"><rect x="0.5" y="0.5" width="14" height="15" fill="#dbe8f8" stroke="#4a6fb8"/><rect x="0.5" y="0.5" width="14" height="2.5" fill="#2a62c0"/><path d="M0.5 6.5h14M0.5 10h14M5 3v12M10 3v12" stroke="#4a6fb8" stroke-width="0.8"/><path d="M5 16l8-8 2.5 2-8 7.5z" fill="#f6c324" stroke="#c07010" stroke-width="0.6"/><path d="M5 16l1.5-3.5 2 2z" fill="#d03a2a"/></svg>
<svg class="a" style="left:1231px;top:81px" width="17" height="17" viewBox="0 0 17 17"><rect x="0.5" y="0.5" width="14" height="15" fill="#dbe8f8" stroke="#4a6fb8"/><rect x="0.5" y="0.5" width="14" height="2.5" fill="#2a62c0"/><path d="M0.5 6.5h14M0.5 10h14M5 3v12M10 3v12" stroke="#4a6fb8" stroke-width="0.8"/><path d="M5 16l8-8 2.5 2-8 7.5z" fill="#f6c324" stroke="#c07010" stroke-width="0.6"/><path d="M5 16l1.5-3.5 2 2z" fill="#d03a2a"/></svg>
<svg class="a" style="left:1259px;top:80px" width="17" height="17" viewBox="0 0 17 17"><rect x="2.5" y="3.5" width="14" height="13" fill="#dbe8f8" stroke="#4a6fb8"/><path d="M2.5 8.5h14M2.5 12.5h14M8 3.5v13" stroke="#4a6fb8" stroke-width="0.8"/><circle cx="4.5" cy="4.5" r="4" fill="#3ab03a" stroke="#1a8a2a" stroke-width="0.8"/><path d="M4.5 2l2.5 2.5h-1.5v2h-2v-2h-1.5z" fill="#fff"/></svg>
<svg class="a" style="left:1282px;top:80px" width="17" height="17" viewBox="0 0 17 17"><rect x="2.5" y="3.5" width="14" height="13" fill="#dbe8f8" stroke="#4a6fb8"/><path d="M2.5 8.5h14M2.5 12.5h14M8 3.5v13" stroke="#4a6fb8" stroke-width="0.8"/><circle cx="4.5" cy="4.5" r="4" fill="#3ab03a" stroke="#1a8a2a" stroke-width="0.8"/><path d="M4.5 2l2.5 2.5h-1.5v2h-2v-2h-1.5z" fill="#fff"/></svg>
<svg class="a" style="left:1313px;top:81px" width="13" height="15" viewBox="0 0 13 15"><path d="M6.5 0.5l6 6h-3.5v6h-5v-6h-3.5z" fill="#b8d4f4" stroke="#8ab0e0"/><rect x="1" y="13" width="11" height="2" fill="#b8d4f4"/></svg>
<svg class="a" style="left:1334px;top:81px" width="17" height="17" viewBox="0 0 17 17"><path d="M1 15l8-8" stroke="#f0a020" stroke-width="3"/><rect x="0" y="1" width="9" height="3" fill="#2a62c0"/><path d="M6 4l9 10" stroke="#888" stroke-width="2.5"/><path d="M10 1a6 6 0 0 1 6 6" stroke="#333" fill="none"/></svg>
<div class="a" style="left:0px;top:636px;width:1365px;height:5px;background:#f6f6f6;border-top:2px solid #fdfdfd"></div>
<div class="a" style="left:0px;top:638px;width:1365px;height:1px;background:#c8c8c8;"></div>
<div class="a" style="left:0px;top:102px;width:175px;height:535px;background:#f3f3f3;border-top:1px solid #a0a0a0;border-bottom:1px solid #a8a8a8"></div>
<div class="a" style="left:170px;top:103px;width:4px;height:533px;background:#d0d8ec;"></div>
<div class="a" style="left:174px;top:103px;width:1px;height:534px;background:#a8a8a8;"></div>
<div class="a" style="left:6px;top:110px;width:126px;height:1px;background:#a0a0a0;"></div>
<div class="a" style="left:6px;top:111px;width:126px;height:1px;background:#fff;"></div>
<div class="a" style="left:6px;top:116px;width:126px;height:1px;background:#a0a0a0;"></div>
<div class="a" style="left:6px;top:117px;width:126px;height:1px;background:#fff;"></div>
<div class="a" style="left:134px;top:109px;width:13px;height:11px;background:#fff;"></div>
<svg class="a" style="left:135px;top:110px" width="11" height="9" viewBox="0 0 11 9"><path d="M1.5 1.5L9.5 7.5M9.5 1.5L1.5 7.5" stroke="#222" stroke-width="2"/></svg>
<svg class="a" style="left:18px;top:126px" width="31" height="30" viewBox="0 0 31 30"><path d="M2.5 2.5L28.5 27.5" stroke="#333" stroke-width="1.1"/><rect x="1" y="1" width="3" height="3" fill="#3a7ac8"/><rect x="27" y="26" width="3" height="3" fill="#3a7ac8"/></svg>
<svg class="a" style="left:52px;top:136px" width="6" height="10" viewBox="0 0 6 10"><path d="M0 0L6 5L0 10z" fill="#000"/></svg>
<div class="a lpt" style="left:62px;top:133px">直线</div>
<svg class="a" style="left:18px;top:166px" width="31" height="31" viewBox="0 0 31 31"><path d="M2 10.5L10.5 2M20 28.5L28.5 20" stroke="#222" stroke-width="1.2"/><path d="M8.5 9.5L20.5 21.5" stroke="#3a7ac8" stroke-width="1.3"/><path d="M6.5 6.5L12.5 8.5L8.5 12.5z M23.5 24.5L17.5 22.5L21.5 18.5z" fill="#3a7ac8"/></svg>
<svg class="a" style="left:52px;top:177px" width="6" height="10" viewBox="0 0 6 10"><path d="M0 0L6 5L0 10z" fill="#000"/></svg>
<div class="a lpt" style="left:62px;top:175px">对齐标注</div>
<svg class="a" style="left:16px;top:207px" width="34" height="35" viewBox="0 0 34 35"><path d="M4.5 1.5h24v23l-8 8h-16z" fill="#fff" stroke="#444"/><path d="M20.5 32.5v-5q0-3 3-3h5" fill="#f4f4f4" stroke="#444"/><rect x="0" y="4" width="26" height="12" fill="#3a6ab8"/><text x="13" y="14.5" font-family="Liberation Sans" font-size="11.5" font-weight="bold" fill="#fff" text-anchor="middle" letter-spacing="-0.5">LSP</text><text x="15" y="23" font-family="Liberation Sans" font-size="6" fill="#ccc" text-anchor="middle">( ! ≡ )</text></svg>
<div class="a lpt" style="left:53px;top:216px;letter-spacing:-0.3px"><span style="font-size:12px;letter-spacing:-1px">VisualLisp</span> 表达式</div>
<div class="a" style="left:153px;top:188px;width:17px;height:413px;background:#a4aab0;"></div>
<div class="a vt act" style="left:153px;top:103px;width:17px;height:85px"><span>命令工具...</span></div>
<div class="a vt" style="left:153px;top:188px;width:17px;height:81px"><span>建筑</span></div>
<div class="a vt" style="left:153px;top:271px;width:17px;height:81px"><span>绘图</span></div>
<div class="a vt" style="left:153px;top:354px;width:17px;height:81px"><span>电力</span></div>
<div class="a vt" style="left:153px;top:437px;width:17px;height:81px"><span>填充图案</span></div>
<div class="a vt" style="left:153px;top:520px;width:17px;height:81px"><span>机械</span></div>
<div class="a" style="left:153px;top:602px;width:17px;height:2px;background:#f6f6f6;"></div>
<div class="a" style="left:153px;top:604px;width:17px;height:2px;background:#b0b0b0;"></div>
<div class="a" style="left:153px;top:607px;width:17px;height:2px;background:#f6f6f6;"></div>
<div class="a" style="left:153px;top:609px;width:17px;height:2px;background:#b0b0b0;"></div>
<div class="a" style="left:153px;top:612px;width:17px;height:2px;background:#f6f6f6;"></div>
<div class="a" style="left:153px;top:614px;width:17px;height:2px;background:#b0b0b0;"></div>
<div class="a" style="left:153px;top:617px;width:17px;height:19px;background:#d4dbee;"></div>
<div class="a" style="left:175px;top:102px;width:26px;height:535px;background:#fff;"></div>
<div class="a" style="left:178px;top:105px;width:20px;height:1px;background:#5aa0f0;"></div>
<div class="a" style="left:178px;top:106px;width:20px;height:1px;background:#bcd8f8;"></div>
<div class="a" style="left:178px;top:108px;width:20px;height:1px;background:#5aa0f0;"></div>
<div class="a" style="left:177px;top:516px;width:22px;height:1px;background:#dcdcdc;"></div>
<svg class="a" style="left:179px;top:116px" width="17" height="17" viewBox="0 0 17 17"><path d="M2.5 2.5L14.5 14.5" stroke="#333" stroke-width="1.1"/><rect x="1" y="1" width="2.5" height="2.5" fill="#3a7ac8"/><rect x="13" y="13" width="2.5" height="2.5" fill="#3a7ac8"/></svg>
<svg class="a" style="left:179px;top:138px" width="17" height="17" viewBox="0 0 17 17"><path d="M1 1L15 15" stroke="#333" stroke-width="0.9" stroke-dasharray="2 1.5"/><path d="M1 1l1 4M1 1l4 1M15 15l-1-4M15 15l-4-1" stroke="#3a7ac8" stroke-width="1.1"/><rect x="7" y="7" width="2.5" height="2.5" fill="#3a7ac8"/></svg>
<svg class="a" style="left:179px;top:160px" width="17" height="17" viewBox="0 0 17 17"><path d="M7 2.5A5 5 0 0 0 7 12.5" stroke="#333" stroke-width="1.1" fill="none"/><path d="M7 12.5h8" stroke="#333" stroke-dasharray="2 2"/><rect x="6" y="1" width="2.5" height="2.5" fill="#3a7ac8"/><rect x="1" y="6" width="2.5" height="2.5" fill="#3a7ac8"/><rect x="6" y="11" width="2.5" height="2.5" fill="#3a7ac8"/><rect x="13" y="11" width="2.5" height="2.5" fill="#3a7ac8"/></svg>
<svg class="a" style="left:179px;top:182px" width="17" height="17" viewBox="0 0 17 17"><path d="M8.5 1.5L15.5 6.5L13 14.5H4L1.5 6.5z" fill="#fff" stroke="#333" stroke-width="1.1"/></svg>
<svg class="a" style="left:179px;top:204px" width="17" height="17" viewBox="0 0 17 17"><path d="M2.5 3.5h12v9h-12z" fill="none" stroke="#333" stroke-width="1.1"/><rect x="1" y="1.5" width="2" height="2" fill="#3a7ac8"/><rect x="13.5" y="12" width="2" height="2" fill="#3a7ac8"/></svg>
<svg class="a" style="left:179px;top:226px" width="17" height="17" viewBox="0 0 17 17"><path d="M2 14.5Q3 5 13.5 3" stroke="#333" stroke-width="1.1" fill="none" stroke-dasharray="3 1"/><rect x="1" y="13" width="2" height="2" fill="#3a7ac8"/><rect x="4.5" y="6" width="2" height="2" fill="#3a7ac8"/><rect x="13" y="2" width="2" height="2" fill="#3a7ac8"/><path d="M16 12v4h-4z" fill="#111"/></svg>
<svg class="a" style="left:179px;top:248px" width="17" height="17" viewBox="0 0 17 17"><path d="M14 6A6.5 6.5 0 1 0 14 11" fill="none" stroke="#333" stroke-width="1.1"/><path d="M8 8.5h6" stroke="#333" stroke-dasharray="1.5 1"/><rect x="7" y="7.5" width="2" height="2" fill="#3a7ac8"/><rect x="13" y="7.5" width="2" height="2" fill="#3a7ac8"/></svg>
<svg class="a" style="left:179px;top:270px" width="17" height="17" viewBox="0 0 17 17"><path d="M3.5 13.5q-3 0-2.5-3q-1.5-2.5 1.5-3.5q0-3 3-3q1.5-2 4-1q2.5-1 4 1.5q2.5 0.5 2 3q1.5 2-0.5 3.5q0 2.5-3 2.5q-1.5 2-4 1q-2.5 1-4-1z" fill="#fff" stroke="#222" stroke-width="1.3"/></svg>
<svg class="a" style="left:179px;top:292px" width="17" height="17" viewBox="0 0 17 17"><path d="M2 11q2-5 5-2t5 1q2-2 2-4" stroke="#333" stroke-width="1.2" fill="none"/><rect x="1" y="10" width="2.3" height="2.3" fill="#3a7ac8"/><rect x="6" y="7" width="2.3" height="2.3" fill="#3a7ac8"/><rect x="13" y="4.5" width="2.3" height="2.3" fill="#3a7ac8"/></svg>
<svg class="a" style="left:179px;top:314px" width="17" height="17" viewBox="0 0 17 17"><ellipse cx="8.3" cy="8.5" rx="7" ry="5.5" fill="none" stroke="#333" stroke-width="1.1"/><rect x="7" y="2" width="2.5" height="2.5" fill="#3a7ac8"/><rect x="7" y="12.5" width="2.5" height="2.5" fill="#3a7ac8"/><rect x="0" y="7.5" width="2.5" height="2.5" fill="#3a7ac8"/><rect x="14" y="7.5" width="2.5" height="2.5" fill="#3a7ac8"/></svg>
<svg class="a" style="left:179px;top:336px" width="17" height="17" viewBox="0 0 17 17"><path d="M6 3.5A6 5.5 0 0 0 13.5 13.5" stroke="#333" stroke-width="1.1" fill="none"/><rect x="5" y="2" width="2.5" height="2.5" fill="#3a7ac8"/><rect x="13" y="12" width="2.5" height="2.5" fill="#3a7ac8"/></svg>
<svg class="a" style="left:179px;top:358px" width="17" height="17" viewBox="0 0 17 17"><path d="M0.5 7.5v-7h14v7" fill="none" stroke="#333" stroke-dasharray="2 1"/><circle cx="6.5" cy="11" r="4.5" fill="#fff" stroke="#333" stroke-width="1.1"/><path d="M5 5h6M9 2.5l2.5 2.5L9 7.5" stroke="#3a9a6a" stroke-width="1.6" fill="none"/><path d="M17 13v4h-4z" fill="#111"/></svg>
<svg class="a" style="left:179px;top:380px" width="17" height="17" viewBox="0 0 17 17"><path d="M0.5 6.5v-5h9" fill="none" stroke="#333" stroke-dasharray="2 1"/><circle cx="10" cy="10.5" r="5" fill="#fff" stroke="#333" stroke-width="1.1"/></svg>
<svg class="a" style="left:179px;top:402px" width="17" height="17" viewBox="0 0 17 17"><rect x="7" y="3" width="2.2" height="2.2" fill="#3a7ac8"/><rect x="2" y="12" width="2.2" height="2.2" fill="#3a7ac8"/><rect x="12" y="12" width="2.2" height="2.2" fill="#3a7ac8"/></svg>
<svg class="a" style="left:179px;top:424px" width="17" height="17" viewBox="0 0 17 17"><rect x="1.5" y="1.5" width="14" height="14" rx="2" fill="#6a8ad8" stroke="#333" stroke-width="1.1"/><rect x="3" y="3" width="11" height="11" fill="#7b9ee0" style="fill:url(#hp)"/><defs><pattern id="hp" width="2" height="2" patternUnits="userSpaceOnUse"><rect width="2" height="2" fill="#a8c0f0"/><rect width="1" height="1" fill="#4a6ac8"/><rect x="1" y="1" width="1" height="1" fill="#4a6ac8"/></pattern></defs></svg>
<svg class="a" style="left:179px;top:446px" width="17" height="17" viewBox="0 0 17 17"><rect x="2.5" y="3.5" width="12" height="10" fill="#fff" stroke="#333" stroke-width="1.1"/><circle cx="8.5" cy="8.5" r="2.5" fill="none" stroke="#333" stroke-width="1.1"/></svg>
<svg class="a" style="left:179px;top:468px" width="17" height="17" viewBox="0 0 17 17"><rect x="1" y="1" width="15" height="15" fill="#fff"/><rect x="1" y="1" width="15" height="4" fill="#3a6ab8"/><path d="M1 5h15M1 8.5h15M1 12h15M5.5 5v11M10 5v11" stroke="#8a5a9a" stroke-width="0.9"/><rect x="1.5" y="5.5" width="14" height="10" fill="none" stroke="#3a6ab8"/></svg>
<svg class="a" style="left:179px;top:490px" width="17" height="17" viewBox="0 0 17 17"><rect x="1.5" y="2.5" width="14" height="13" fill="#fff" stroke="#333" stroke-width="1.1"/><path d="M4 9l2-5 2 5M4.8 7.5h2.4" stroke="#3a7ac8" stroke-width="1"/><path d="M8 9.5h6M4 12h10" stroke="#333" stroke-width="1.1"/></svg>
<div class="a" style="left:201px;top:102px;width:888px;height:25px;background:#4a5059;border-top:1px solid #2e333a"></div>
<div class="a" style="left:205px;top:104px;width:129px;height:23px;background:#636c76;border-radius:4px 4px 0 0"></div>
<svg class="a" style="left:212px;top:107px" width="15" height="16" viewBox="0 0 15 16"><rect x="0" y="0" width="15" height="16" rx="3" fill="#2a62c0"/><rect x="0" y="5" width="15" height="6" fill="#fff"/><text x="7.5" y="10.3" font-family="Liberation Sans" font-size="6" font-weight="bold" fill="#2a62c0" text-anchor="middle">DWG</text></svg>
<div class="a" style="left:235px;top:107px;font-size:13px;font-weight:bold;color:#f4f4f4;line-height:18px">Drawing1.dwg</div>
<svg class="a" style="left:1047px;top:110px" width="6" height="9" viewBox="0 0 6 9"><path d="M5.5 0.5v8l-5-4z" fill="none" stroke="#8a9098"/></svg>
<svg class="a" style="left:1060px;top:110px" width="6" height="9" viewBox="0 0 6 9"><path d="M0.5 0.5v8l5-4z" fill="none" stroke="#8a9098"/></svg>
<svg class="a" style="left:1071px;top:110px" width="10" height="6" viewBox="0 0 10 6"><path d="M0 0h10l-5 6z" fill="#fff"/></svg>
<div class="a" style="left:201px;top:126px;width:888px;height:1px;background:#9aa0a6;"></div>
<div class="a" style="left:201px;top:127px;width:1px;height:510px;background:#d0d0d0;"></div>
<div class="a" style="left:202px;top:127px;width:887px;height:494px;background:#000;"></div>
<div class="a" style="left:202px;top:621px;width:887px;height:15px;background:#4a5059;"></div>
<svg class="a" style="left:202px;top:621px" width="70" height="15" viewBox="202 621 70 15"><g fill="#99a1a9"><rect x="208" y="623" width="1.2" height="9.5"/><path d="M215.5 623V632.5L210 627.75z"/><path d="M231 623V632.5L225.5 627.75z"/><path d="M240 623V632.5L245.5 627.75z"/><path d="M256 623V632.5L261.5 627.75z"/><rect x="262.5" y="623" width="1.2" height="9.5"/></g></svg>
<svg class="a" style="left:202px;top:621px" width="887" height="15" viewBox="202 621 887 15"><path d="M268.5 620.5L274.5 635.5H307L313.5 620.5z" fill="#22272e"/><g stroke="#c8ccd0" stroke-width="1.1" fill="none"><path d="M268.5 621L274.5 635.5M307 635.5L313.5 621M310.8 627.5L314 635.5M354 621L360 635.5M353 635.5L356.5 627.5M399.5 635.5L406 621"/></g></svg>
<div class="a" style="left:279px;top:619px;font-size:12px;font-weight:bold;color:#fff;line-height:16px">模型</div>
<div class="a" style="left:318px;top:619px;font-size:12px;color:#e8e8e8;line-height:16px">布局1</div>
<div class="a" style="left:364px;top:619px;font-size:12px;color:#e8e8e8;line-height:16px">布局2</div>
<div class="a" style="left:1089px;top:102px;width:27px;height:535px;background:#fff;"></div>
<div class="a" style="left:1116px;top:102px;width:1px;height:535px;background:#c8c8c8;"></div>
<div class="a" style="left:1117px;top:102px;width:3px;height:535px;background:#d0d8ec;"></div>
<div class="a" style="left:1095px;top:105px;width:20px;height:1px;background:#5aa0f0;"></div>
<div class="a" style="left:1095px;top:106px;width:20px;height:1px;background:#bcd8f8;"></div>
<div class="a" style="left:1095px;top:108px;width:20px;height:1px;background:#5aa0f0;"></div>
<div class="a" style="left:1091px;top:426px;width:24px;height:1px;background:#dcdcdc;"></div>
<div class="a" style="left:1095px;top:432px;width:20px;height:1px;background:#5aa0f0;"></div>
<div class="a" style="left:1095px;top:433px;width:20px;height:1px;background:#bcd8f8;"></div>
<div class="a" style="left:1095px;top:435px;width:20px;height:1px;background:#5aa0f0;"></div>
<svg class="a" style="left:1095px;top:116px" width="19" height="17" viewBox="0 0 19 17"><rect x="1.5" y="3.5" width="14" height="10" fill="#c8dcf4" stroke="#4a7ac8"/><path d="M8.5 13.5v-4.5h7" stroke="#9ab8e0" fill="#e0ecf8" stroke-width="0.8"/><circle cx="4.5" cy="4.5" r="4" fill="#f6b42a" stroke="#e0961a" stroke-width="1" stroke-dasharray="1.2 0.6"/><circle cx="4.5" cy="4.5" r="1.3" fill="#fff"/><path d="M16.5 11v4.5h-4.5z" fill="#111"/></svg>
<svg class="a" style="left:1095px;top:138px" width="19" height="17" viewBox="0 0 19 17"><circle cx="10" cy="5.5" r="4.8" fill="#fff" stroke="#4a7ac8"/><text x="10" y="8.7" font-family="Liberation Sans" font-size="8" fill="#4a7ac8" text-anchor="middle">1</text><path d="M6.5 9L1 14.5M1 14.5v-3.5M1 14.5h3.5" stroke="#4a7ac8" stroke-width="1.2" fill="none"/><path d="M16.5 11v4.5h-4.5z" fill="#111"/></svg>
<svg class="a" style="left:1095px;top:160px" width="19" height="17" viewBox="0 0 19 17"><path d="M3.5 1v13.5M1 13.5h14" stroke="#4a7ac8" stroke-width="1.1" fill="none"/><path d="M1.5 3l2-2 2 2" stroke="#4a7ac8" fill="none"/><path d="M4 13l5-5h5V3" stroke="#f0a020" stroke-width="1.3" fill="none"/><path d="M16.5 11v4.5h-4.5z" fill="#111"/></svg>
<svg class="a" style="left:1095px;top:182px" width="19" height="17" viewBox="0 0 19 17"><path d="M1 12Q7.5 -3 14 12" stroke="#4a9ae0" stroke-width="1.2" fill="none"/><path d="M0 9.5h16M3.5 1v15" stroke="#4a7ac8" stroke-width="1"/><path d="M16.5 11v4.5h-4.5z" fill="#111"/></svg>
<svg class="a" style="left:1095px;top:204px" width="19" height="17" viewBox="0 0 19 17"><path d="M1.5 1v14M16 1v10M1.5 5.5H16" stroke="#4a7ac8" stroke-width="1.1"/><path d="M13 3.5L16 5.5L13 7.5" stroke="#4a7ac8" fill="none"/><path d="M3 1.5Q9 1 9 5.5Q9 9.5 3.5 9.5L10 14.5" stroke="#3aa04a" stroke-width="1.3" fill="none"/><path d="M16.5 11v4.5h-4.5z" fill="#111"/></svg>
<svg class="a" style="left:1095px;top:226px" width="19" height="17" viewBox="0 0 19 17"><text x="0.5" y="6.5" font-family="Liberation Sans" font-size="7.5" font-weight="bold" fill="#3a6ac0" letter-spacing="-0.5">3.2</text><path d="M0.5 8h9.5M1 8l4.5 6 5-7.5" stroke="#4a7ac8" stroke-width="1.3" fill="none"/><path d="M9 14L15 1" stroke="#4a7ac8" stroke-width="1.2"/><path d="M16.5 11v4.5h-4.5z" fill="#111"/></svg>
<svg class="a" style="left:1095px;top:248px" width="19" height="17" viewBox="0 0 19 17"><path d="M1.5 5V1.5H6M4.5 0l1.5 1.5-1.5 1.5M1.5 9v4.5H6M4.5 12l1.5 1.5-1.5 1.5" stroke="#4a7ac8" stroke-width="1" fill="none"/><text x="3" y="10" font-family="Liberation Mono" font-size="6.5" fill="#4a7ac8" letter-spacing="-0.6">A-A</text><path d="M16.5 11v4.5h-4.5z" fill="#111"/></svg>
<svg class="a" style="left:1095px;top:270px" width="19" height="17" viewBox="0 0 19 17"><path d="M5 0.5L1 6h3L1.5 11L8 4.5H5L7.5 0.5z" fill="#f6b42a" stroke="#e0901a" stroke-width="0.5"/><path d="M4.5 15.5L13 7L15 9L6.5 17z" fill="#f6c324" stroke="#b07010" stroke-width="0.6"/><path d="M13 7l1-1 2 2-1 1z" fill="#e04a3a"/><path d="M16.5 11v4.5h-4.5z" fill="#111"/></svg>
<div class="a" style="left:1094px;top:292px;font-size:10px;color:#2a9a1a;line-height:12px;letter-spacing:-0.4px">Text</div>
<svg class="a" style="left:1107px;top:303px" width="5" height="5" viewBox="0 0 5 5"><path d="M5 0v5h-5z" fill="#111"/></svg>
<svg class="a" style="left:1095px;top:314px" width="19" height="17" viewBox="0 0 19 17"><path d="M1.5 3.5v11h14v-9h-8l-1.5-2z" fill="#c8dcf4" stroke="#4a7ac8"/><path d="M5 8.5h9M5 11.5h9M8 7v6" stroke="#4a7ac8"/><path d="M16.5 11v4.5h-4.5z" fill="#111"/></svg>
<svg class="a" style="left:1095px;top:336px" width="19" height="17" viewBox="0 0 19 17"><path d="M5 6h5v5H5z" fill="#c8dcf4" stroke="#4a7ac8"/><path d="M10 4l5-3v15l-5-3z" fill="#c8dcf4" stroke="#4a7ac8"/><path d="M1 8.5h4" stroke="#4a7ac8"/><path d="M16.5 11v4.5h-4.5z" fill="#111"/></svg>
<svg class="a" style="left:1095px;top:358px" width="19" height="17" viewBox="0 0 19 17"><path d="M1 3.5h15M5 1.5h7" stroke="#4a7ac8" stroke-width="1.3"/><path d="M2.5 5.5h12l-1 11h-10z" fill="#c8dcf4" stroke="#4a7ac8"/><path d="M6 7v8M8.5 7v8M11 7v8" stroke="#4a7ac8"/><path d="M16.5 11v4.5h-4.5z" fill="#111"/></svg>
<svg class="a" style="left:1095px;top:380px" width="19" height="17" viewBox="0 0 19 17"><rect x="0.5" y="2.5" width="13" height="9" fill="#c8dcf4" stroke="#4a7ac8"/><rect x="3.5" y="5.5" width="13" height="9" fill="#e0ecf8" stroke="#4a7ac8"/><path d="M6 9h8M6 11.5h8" stroke="#4a7ac8"/><path d="M16.5 11v4.5h-4.5z" fill="#111"/></svg>
<svg class="a" style="left:1095px;top:402px" width="19" height="17" viewBox="0 0 19 17"><rect x="2.5" y="0.5" width="12" height="15" fill="#c8dcf4" stroke="#4a7ac8"/><rect x="2.5" y="0.5" width="2" height="15" fill="#4a7ac8"/><text x="9.5" y="12" font-family="Liberation Sans" font-size="10" fill="#4a7ac8" text-anchor="middle">?</text><path d="M16.5 11v4.5h-4.5z" fill="#111"/></svg>
<svg class="a" style="left:1095px;top:441px" width="19" height="17" viewBox="0 0 19 17"><path d="M2 11l8-8q1.5-1.5 3 0l2 2q1.5 1.5 0 3l-8 8q-1.5 1.5-3 0l-2-2q-1.5-1.5 0-3z" fill="#fff" stroke="#333" stroke-width="1.1"/><path d="M7 6l5 5" stroke="#4a7ac8" stroke-width="2.5"/></svg>
<svg class="a" style="left:1095px;top:463px" width="19" height="17" viewBox="0 0 19 17"><rect x="0.5" y="0.5" width="5" height="5" fill="none" stroke="#333"/><rect x="8.5" y="9.5" width="8" height="6" fill="none" stroke="#8a3a8a" stroke-dasharray="2 1"/><path d="M8 2q5 0 5 6M11 6l2 3 2-3" stroke="#3a7ac8" stroke-width="1.3" fill="none"/></svg>
<svg class="a" style="left:1095px;top:485px" width="19" height="17" viewBox="0 0 19 17"><path d="M6 3v14" stroke="#333"/><path d="M4.5 4L0.5 14h4z" fill="none" stroke="#333"/><path d="M8 4l6 10H8z" fill="#8a3a8a"/></svg>
<svg class="a" style="left:1095px;top:507px" width="19" height="17" viewBox="0 0 19 17"><path d="M2 14q-2 0-1-4q0-3 3-3q0-5 5-5q4 0 4 5h2q3 0 3 3v4z" fill="none" stroke="#8a3a8a" stroke-width="1.3"/><path d="M4 12q-1 0-1-2q1-1 3-1q0-4 3-4t3 4v1h3q1 0 1 2z" fill="none" stroke="#333" stroke-width="0.9"/></svg>
<svg class="a" style="left:1095px;top:529px" width="19" height="17" viewBox="0 0 19 17"><rect x="1" y="1" width="7" height="7" fill="#8a3a8a"/><rect x="9" y="1" width="7" height="7" fill="#9a7aa0"/><rect x="1" y="9" width="7" height="7" fill="#9a7aa0"/><rect x="9" y="9" width="7" height="7" fill="#9a7aa0"/></svg>
<svg class="a" style="left:1095px;top:552px" width="19" height="17" viewBox="0 0 19 17"><path d="M8.5 0.5v16M0.5 8.5h16" stroke="#333" stroke-width="1.1"/><path d="M5.5 3.5l3-3 3 3M5.5 13.5l3 3 3-3M3.5 5.5l-3 3 3 3M13.5 5.5l3 3-3 3" fill="none" stroke="#333" stroke-width="1.1"/></svg>
<svg class="a" style="left:1095px;top:574px" width="19" height="17" viewBox="0 0 19 17"><path d="M10 3.5A6 6 0 1 0 14.5 9" stroke="#333" stroke-width="1.3" fill="none"/><path d="M8 0.5l3 3-3 3" stroke="#333" stroke-width="1.2" fill="none"/></svg>
<svg class="a" style="left:1095px;top:596px" width="19" height="17" viewBox="0 0 19 17"><path d="M1.5 12.5v-11h11v3" stroke="#333" fill="none"/><path d="M1.5 15.5h14v-8" stroke="#333" stroke-dasharray="2 1.5" fill="none"/><path d="M7 9l6 5M10 14h3v-3" stroke="#8a3a8a" stroke-width="1.2" fill="none"/></svg>
<svg class="a" style="left:1095px;top:617px" width="19" height="17" viewBox="0 0 19 17"><rect x="1.5" y="1.5" width="15" height="14" fill="none" stroke="#333" stroke-dasharray="2.5 1.5"/><path d="M9 13V5M6 8l3-3 3 3" stroke="#8a3a8a" stroke-width="1.8" fill="none"/></svg>
<svg class="a" style="left:202px;top:127px" width="887" height="494" viewBox="202 127 887 494" shape-rendering="crispEdges">
<rect x="281" y="217" width="216" height="1" fill="#ff0000"/>
<rect x="281" y="369" width="216" height="1" fill="#ff0000"/>
<rect x="281" y="217" width="1" height="153" fill="#ff0000"/>
<rect x="496" y="217" width="1" height="153" fill="#ff0000"/>
<rect x="293" y="220" width="201" height="1" fill="#ffffff"/>
<rect x="293" y="367" width="201" height="1" fill="#ffffff"/>
<rect x="293" y="220" width="1" height="148" fill="#ffffff"/>
<rect x="493" y="220" width="1" height="148" fill="#ffffff"/>
<rect x="293" y="226" width="32" height="1" fill="#00ffff"/>
<rect x="293" y="232" width="32" height="1" fill="#00ffff"/>
<rect x="324" y="220" width="1" height="13" fill="#00ffff"/>
<rect x="401" y="344" width="93" height="1" fill="#ffffff"/>
<rect x="401" y="344" width="1" height="24" fill="#ffffff"/>
<rect x="405" y="345" width="1" height="22" fill="#00ffff"/>
<rect x="409" y="345" width="1" height="22" fill="#00ffff"/>
<rect x="432" y="345" width="1" height="22" fill="#00ffff"/>
<rect x="463" y="345" width="1" height="22" fill="#00ffff"/>
<rect x="419" y="345" width="1" height="13" fill="#00ffff"/>
<rect x="427" y="345" width="1" height="13" fill="#00ffff"/>
<rect x="416" y="357" width="1" height="10" fill="#00ffff"/>
<rect x="424" y="357" width="1" height="10" fill="#00ffff"/>
<rect x="402" y="346" width="30" height="1" fill="#00ffff"/>
<rect x="402" y="348" width="30" height="1" fill="#00ffff"/>
<rect x="402" y="350" width="30" height="1" fill="#00ffff"/>
<rect x="402" y="352" width="30" height="1" fill="#00ffff"/>
<rect x="402" y="358" width="30" height="1" fill="#00ffff"/>
<rect x="402" y="360" width="30" height="1" fill="#00ffff"/>
<rect x="402" y="362" width="30" height="1" fill="#00ffff"/>
<rect x="402" y="364" width="30" height="1" fill="#00ffff"/>
<rect x="432" y="357" width="32" height="1" fill="#00ffff"/>
<rect x="432" y="360" width="32" height="1" fill="#00ffff"/>
<rect x="432" y="364" width="32" height="1" fill="#00ffff"/>
<rect x="436" y="357" width="1" height="10" fill="#00ffff"/>
<rect x="440" y="357" width="1" height="10" fill="#00ffff"/>
<rect x="443" y="357" width="1" height="10" fill="#00ffff"/>
<rect x="447" y="357" width="1" height="10" fill="#00ffff"/>
<rect x="455" y="357" width="1" height="10" fill="#00ffff"/>
<rect x="458" y="357" width="1" height="10" fill="#00ffff"/>
<rect x="464" y="351" width="29" height="1" fill="#00ffff"/>
<rect x="464" y="359" width="29" height="1" fill="#00ffff"/>
<rect x="402" y="354" width="22" height="5" fill="#00ff00"/>
<rect x="403" y="361" width="6" height="6" fill="#00ff00"/>
<rect x="424" y="363" width="8" height="4" fill="#00ff00"/>
<rect x="418" y="363" width="3" height="4" fill="#00ff00"/>
<rect x="426" y="354" width="3" height="3" fill="#00ff00"/>
<rect x="436" y="358" width="3" height="2" fill="#00ff00"/>
<rect x="441" y="358" width="5" height="2" fill="#00ff00"/>
<rect x="449" y="358" width="5" height="2" fill="#00ff00"/>
<rect x="457" y="358" width="4" height="2" fill="#00ff00"/>
<rect x="457" y="361" width="2" height="4" fill="#00ff00"/>
<rect x="437" y="365" width="2" height="2" fill="#00ff00"/>
<rect x="445" y="365" width="2" height="2" fill="#00ff00"/>
<rect x="340" y="407" width="153" height="1" fill="#ff0000"/>
<rect x="340" y="514" width="153" height="1" fill="#ff0000"/>
<rect x="340" y="407" width="1" height="108" fill="#ff0000"/>
<rect x="492" y="407" width="1" height="108" fill="#ff0000"/>
<rect x="353" y="409" width="137" height="1" fill="#ffffff"/>
<rect x="353" y="512" width="137" height="1" fill="#ffffff"/>
<rect x="353" y="409" width="1" height="104" fill="#ffffff"/>
<rect x="489" y="409" width="1" height="104" fill="#ffffff"/>
<rect x="353" y="415" width="31" height="1" fill="#00ffff"/>
<rect x="353" y="421" width="31" height="1" fill="#00ffff"/>
<rect x="383" y="409" width="1" height="13" fill="#00ffff"/>
<rect x="397" y="487" width="81" height="4" fill="#ffffff"/>
<rect x="478" y="487" width="12" height="1" fill="#ffffff"/>
<rect x="478" y="490" width="12" height="1" fill="#ffffff"/>
<rect x="398" y="488" width="2" height="2" fill="#000"/>
<rect x="416" y="488" width="3" height="1" fill="#0000ff"/>
<rect x="456" y="489" width="3" height="2" fill="#0000ff"/>
<rect x="397" y="487" width="1" height="26" fill="#ffffff"/>
<rect x="400" y="491" width="1" height="22" fill="#ffffff"/>
<rect x="405" y="491" width="1" height="22" fill="#ffffff"/>
<rect x="417" y="491" width="1" height="22" fill="#ffffff"/>
<rect x="421" y="491" width="1" height="22" fill="#ffffff"/>
<rect x="425" y="491" width="1" height="22" fill="#ffffff"/>
<rect x="436" y="498" width="1" height="15" fill="#ffffff"/>
<rect x="444" y="498" width="1" height="15" fill="#ffffff"/>
<rect x="448" y="498" width="1" height="15" fill="#ffffff"/>
<rect x="398" y="494" width="31" height="1" fill="#ff0000"/>
<rect x="436" y="494" width="13" height="1" fill="#ff0000"/>
<rect x="398" y="497" width="31" height="1" fill="#ff0000"/>
<rect x="436" y="497" width="13" height="1" fill="#ff0000"/>
<rect x="398" y="501" width="31" height="1" fill="#ff0000"/>
<rect x="436" y="501" width="13" height="1" fill="#ff0000"/>
<rect x="398" y="504" width="31" height="1" fill="#ff0000"/>
<rect x="436" y="504" width="13" height="1" fill="#ff0000"/>
<rect x="398" y="508" width="31" height="1" fill="#ff0000"/>
<rect x="436" y="508" width="13" height="1" fill="#ff0000"/>
<rect x="429" y="491" width="7" height="21" fill="#00bfff"/>
<rect x="429" y="492" width="1" height="1" fill="#000"/>
<rect x="434" y="492" width="1" height="1" fill="#000"/>
<rect x="429" y="496" width="1" height="1" fill="#000"/>
<rect x="434" y="496" width="1" height="1" fill="#000"/>
<rect x="429" y="500" width="1" height="1" fill="#000"/>
<rect x="434" y="500" width="1" height="1" fill="#000"/>
<rect x="429" y="504" width="1" height="1" fill="#000"/>
<rect x="434" y="504" width="1" height="1" fill="#000"/>
<rect x="429" y="507" width="1" height="1" fill="#000"/>
<rect x="434" y="507" width="1" height="1" fill="#000"/>
<rect x="429" y="510" width="1" height="1" fill="#000"/>
<rect x="434" y="510" width="1" height="1" fill="#000"/>
<rect x="398" y="508" width="2" height="4" fill="#00bfff"/>
<rect x="401" y="508" width="4" height="4" fill="#00bfff"/>
<rect x="406" y="509" width="11" height="3" fill="#00bfff"/>
<rect x="418" y="508" width="3" height="4" fill="#00bfff"/>
<rect x="422" y="508" width="3" height="4" fill="#00bfff"/>
<rect x="426" y="508" width="2" height="4" fill="#00bfff"/>
<rect x="451" y="491" width="6" height="6" fill="#0000ff"/>
<rect x="452" y="490" width="4" height="8" fill="#0000ff"/>
<rect x="450" y="492" width="8" height="4" fill="#0000ff"/>
<rect x="458" y="491" width="28" height="2" fill="#00bfff"/>
<rect x="458" y="495" width="27" height="2" fill="#00ffff"/>
<rect x="449" y="497" width="41" height="1" fill="#ffffff"/>
<rect x="459" y="497" width="1" height="8" fill="#ffffff"/>
<rect x="449" y="491" width="1" height="22" fill="#ffffff"/>
<rect x="449" y="498" width="6" height="6" fill="#00bfff"/>
<rect x="436" y="501" width="54" height="1" fill="#ff0000"/>
<rect x="459" y="504" width="31" height="1" fill="#ffffff"/>
<rect x="450" y="504" width="19" height="4" fill="#00bfff"/>
<rect x="469" y="505" width="8" height="2" fill="#00bfff"/>
<rect x="454" y="504" width="1" height="9" fill="#ff0000"/>
<rect x="459" y="504" width="1" height="9" fill="#ff0000"/>
<rect x="464" y="504" width="1" height="9" fill="#ff0000"/>
<rect x="469" y="508" width="1" height="5" fill="#ffffff"/>
<rect x="397" y="512" width="93" height="1" fill="#ffffff"/>
<rect x="489" y="487" width="1" height="26" fill="#ffffff"/>
<rect x="560" y="217" width="432" height="1" fill="#ff0000"/>
<rect x="560" y="521" width="432" height="1" fill="#ff0000"/>
<rect x="560" y="217" width="1" height="305" fill="#ff0000"/>
<rect x="991" y="217" width="1" height="305" fill="#ff0000"/>
<rect x="573" y="222" width="414" height="1" fill="#ffffff"/>
<rect x="573" y="516" width="414" height="1" fill="#ffffff"/>
<rect x="573" y="222" width="1" height="295" fill="#ffffff"/>
<rect x="986" y="222" width="1" height="295" fill="#ffffff"/>
<rect x="573" y="228" width="32" height="1" fill="#00ffff"/>
<rect x="573" y="234" width="32" height="1" fill="#00ffff"/>
<rect x="604" y="222" width="1" height="13" fill="#00ffff"/>
<rect x="894" y="491" width="81" height="4" fill="#ffffff"/>
<rect x="975" y="491" width="12" height="1" fill="#ffffff"/>
<rect x="975" y="495" width="12" height="1" fill="#ffffff"/>
<rect x="895" y="492" width="2" height="2" fill="#000"/>
<rect x="913" y="492" width="3" height="1" fill="#0000ff"/>
<rect x="953" y="494" width="3" height="1" fill="#0000ff"/>
<rect x="894" y="491" width="1" height="26" fill="#ffffff"/>
<rect x="897" y="495" width="1" height="22" fill="#ffffff"/>
<rect x="902" y="495" width="1" height="22" fill="#ffffff"/>
<rect x="912" y="495" width="1" height="22" fill="#ffffff"/>
<rect x="917" y="495" width="1" height="22" fill="#ffffff"/>
<rect x="921" y="495" width="1" height="22" fill="#ffffff"/>
<rect x="925" y="495" width="1" height="22" fill="#ffffff"/>
<rect x="933" y="502" width="1" height="15" fill="#ffffff"/>
<rect x="940" y="502" width="1" height="15" fill="#ffffff"/>
<rect x="945" y="502" width="1" height="15" fill="#ffffff"/>
<rect x="895" y="498" width="30" height="1" fill="#ff0000"/>
<rect x="895" y="502" width="30" height="1" fill="#ff0000"/>
<rect x="895" y="505" width="30" height="1" fill="#ff0000"/>
<rect x="895" y="509" width="30" height="1" fill="#ff0000"/>
<rect x="895" y="513" width="30" height="1" fill="#ff0000"/>
<rect x="934" y="505" width="11" height="1" fill="#ff0000"/>
<rect x="934" y="509" width="11" height="1" fill="#ff0000"/>
<rect x="934" y="513" width="11" height="1" fill="#ff0000"/>
<rect x="925" y="495" width="18" height="2" fill="#00bfff"/>
<rect x="926" y="497" width="4" height="1" fill="#00bfff"/>
<rect x="956" y="495" width="18" height="2" fill="#00bfff"/>
<rect x="956" y="497" width="5" height="1" fill="#00bfff"/>
<rect x="955" y="495" width="1" height="7" fill="#ffffff"/>
<rect x="925" y="501" width="62" height="1" fill="#ffffff"/>
<rect x="926" y="502" width="7" height="15" fill="#00ffff"/>
<rect x="926" y="503" width="1" height="1" fill="#000"/>
<rect x="931" y="503" width="1" height="1" fill="#000"/>
<rect x="926" y="507" width="1" height="1" fill="#000"/>
<rect x="931" y="507" width="1" height="1" fill="#000"/>
<rect x="926" y="511" width="1" height="1" fill="#000"/>
<rect x="931" y="511" width="1" height="1" fill="#000"/>
<rect x="926" y="514" width="1" height="1" fill="#000"/>
<rect x="931" y="514" width="1" height="1" fill="#000"/>
<rect x="895" y="513" width="2" height="3" fill="#00bfff"/>
<rect x="898" y="513" width="4" height="3" fill="#00bfff"/>
<rect x="903" y="514" width="9" height="2" fill="#00bfff"/>
<rect x="913" y="513" width="4" height="3" fill="#00bfff"/>
<rect x="918" y="513" width="3" height="3" fill="#00bfff"/>
<rect x="922" y="513" width="3" height="3" fill="#00bfff"/>
<rect x="946" y="502" width="41" height="1" fill="#ffffff"/>
<rect x="948" y="503" width="6" height="6" fill="#0000ff"/>
<rect x="949" y="502" width="4" height="8" fill="#0000ff"/>
<rect x="947" y="504" width="8" height="4" fill="#0000ff"/>
<rect x="955" y="503" width="29" height="2" fill="#00bfff"/>
<rect x="955" y="505" width="28" height="3" fill="#00ffff"/>
<rect x="946" y="509" width="41" height="1" fill="#ffffff"/>
<rect x="946" y="510" width="20" height="3" fill="#00bfff"/>
<rect x="966" y="510" width="11" height="2" fill="#00bfff"/>
<rect x="946" y="513" width="21" height="1" fill="#ff0000"/>
<rect x="950" y="509" width="1" height="8" fill="#ff0000"/>
<rect x="955" y="509" width="1" height="8" fill="#ff0000"/>
<rect x="961" y="509" width="1" height="8" fill="#ff0000"/>
<rect x="966" y="509" width="1" height="8" fill="#ffffff"/>
<rect x="894" y="516" width="93" height="1" fill="#ffffff"/>
<rect x="986" y="491" width="1" height="26" fill="#ffffff"/>
</svg>
<svg class="a" style="left:202px;top:127px" width="887" height="494" viewBox="202 127 887 494">
<g stroke="#fff" stroke-width="1.2" fill="none">
<path d="M240.5 443V520.5"/><path d="M237 452L240.5 443L244 452"/>
<path d="M246 525.5H325"/><path d="M316 521.5L325 525.5L316 529.5"/>
<rect x="235.5" y="520.5" width="10" height="10"/><path d="M240.5 520.5v10M235.5 525.5h10"/>
<path d="M237 422L242.5 428.5L248 422M242.5 428.5V435"/>
<path d="M334 520L344 533M344 520L334 533"/>
</g>
<g stroke="#fff" stroke-width="1" fill="none" shape-rendering="crispEdges">
<path d="M348.5 566V608M348.5 618V621M301 613.5H343M354 613.5H395"/>
<rect x="343.5" y="608.5" width="10" height="10"/><path d="M348.5 608.5v10M343.5 613.5h10"/>
</g></svg>
<div class="a" style="left:1120px;top:102px;width:245px;height:534px;background:#f3f3f3;border-top:1px solid #a0a0a0"></div>
<div class="a" style="left:1126px;top:110px;width:219px;height:1px;background:#a0a0a0;"></div>
<div class="a" style="left:1126px;top:111px;width:219px;height:1px;background:#fff;"></div>
<div class="a" style="left:1126px;top:116px;width:219px;height:1px;background:#a0a0a0;"></div>
<div class="a" style="left:1126px;top:117px;width:219px;height:1px;background:#fff;"></div>
<div class="a" style="left:1348px;top:108px;width:13px;height:12px;background:#fff;"></div>
<svg class="a" style="left:1349px;top:110px" width="11" height="9" viewBox="0 0 11 9"><path d="M1.5 1.5L9.5 7.5M9.5 1.5L1.5 7.5" stroke="#333" stroke-width="1.8"/></svg>
<div class="a" style="left:1128px;top:127px;width:150px;height:23px;border:1px solid #8c8c8c;background:#fff"></div>
<div class="a" style="left:1261px;top:128px;width:16px;height:21px;background:#eef1f5;"></div>
<div class="a" style="left:1131px;top:130px;font-size:12px;line-height:18px">无选择</div>
<div class="a" style="left:1283px;top:125px;width:73px;height:25px;border:1px solid #555;background:#f3f3f3"></div>
<div class="a" style="left:1307px;top:126px;width:1px;height:23px;background:#555;"></div>
<div class="a" style="left:1331px;top:126px;width:1px;height:23px;background:#555;"></div>
<svg class="a" style="left:1290px;top:130px" width="12" height="14" viewBox="0 0 12 14"><rect x="0.5" y="6.5" width="10" height="7" fill="none" stroke="#333"/></svg>
<svg class="a" style="left:1311px;top:130px" width="18" height="16" viewBox="0 0 18 16"><path d="M5 4A5 5 0 1 0 10 12" stroke="#555" fill="none" stroke-width="1.1"/><rect x="5.5" y="0.5" width="9" height="8" fill="#c8dcf4" stroke="#4a7ac8"/><path d="M10 7v8l2-2 2 3 1-0.5-2-3h3z" fill="#fff" stroke="#333" stroke-width="0.8"/></svg>
<svg class="a" style="left:1335px;top:130px" width="18" height="16" viewBox="0 0 18 16"><path d="M1 1v11l3-3 3 5 1.5-1-3-5h4z" fill="#fff" stroke="#333" stroke-width="0.9"/><path d="M13 3l-4 6h3l-2 6 5-7h-3l2-5z" fill="#f6b42a"/></svg>
<div class="a" style="left:1206px;top:117px;width:103px;height:25px;border-radius:3px;background:linear-gradient(90deg,#2a8ee6 0,#2a8ee6 30px,#62b4f0 30px,#62b4f0 44px,transparent 44px),linear-gradient(180deg,#e2f0fc,#b0d8f6);border:1px solid #5aa8e8"></div>
<svg class="a" style="left:1210px;top:120px" width="24" height="19" viewBox="0 0 24 19"><circle cx="7" cy="11" r="3.6" fill="none" stroke="#fff" stroke-width="2.4"/><circle cx="12" cy="5.5" r="2.8" fill="none" stroke="#fff" stroke-width="2.4"/><path d="M14.5 4.5A5.5 5.5 0 0 1 20 10.5" stroke="#fff" stroke-width="2.4" fill="none"/><circle cx="20.5" cy="15.5" r="1.5" fill="#fff"/><path d="M9.5 9L10.5 8" stroke="#fff" stroke-width="2.4"/></svg>
<svg class="a" style="left:1239px;top:122px" width="9" height="14" viewBox="0 0 9 14"><path d="M4.5 1v7" stroke="#1a5aa0" stroke-width="2"/><path d="M0.5 7.5h8L4.5 12z" fill="#1a5aa0"/></svg>
<div class="a" style="left:1250px;top:123px;font-size:12.5px;line-height:16px;color:#5f7d9a;letter-spacing:0.1px">281 KB/s</div>
<div class="a" style="left:1130px;top:161px;width:217px;height:17px;background:#363c46;border-radius:6px 6px 0 0"></div>
<div class="a" style="left:1137px;top:161px;font-size:13px;line-height:19px;font-weight:bold;color:#fff">一般</div>
<svg class="a" style="left:1328px;top:164px" width="12" height="12" viewBox="0 0 12 12"><path d="M1.5 6L6 2L10.5 6M1.5 10.5L6 6.5L10.5 10.5" stroke="#fff" stroke-width="1.5" fill="none"/></svg>
<div class="a" style="left:1146px;top:178px;width:83px;height:18px;border:1px solid #a8a8a8;background:#f0f0f0"></div>
<div class="a" style="left:1228px;top:178px;width:119px;height:18px;border:1px solid #a8a8a8;background:#fff"></div>
<div class="a pk" style="left:1151px;top:178px">颜色</div>
<svg class="a" style="left:1232px;top:183px" width="10" height="10" viewBox="0 0 10 10"><rect x="0.5" y="0.5" width="9" height="9" fill="#fff" stroke="#111"/></svg>
<div class="a pv" style="left:1247px;top:178px">ByLayer</div>
<div class="a" style="left:1146px;top:195px;width:83px;height:18px;border:1px solid #a8a8a8;background:#f0f0f0"></div>
<div class="a" style="left:1228px;top:195px;width:119px;height:18px;border:1px solid #a8a8a8;background:#fff"></div>
<div class="a pk" style="left:1151px;top:195px">层</div>
<div class="a pv" style="left:1230px;top:195px">0</div>
<div class="a" style="left:1146px;top:212px;width:83px;height:18px;border:1px solid #a8a8a8;background:#f0f0f0"></div>
<div class="a" style="left:1228px;top:212px;width:119px;height:18px;border:1px solid #a8a8a8;background:#fff"></div>
<div class="a pk" style="left:1151px;top:212px">线型</div>
<div class="a" style="left:1234px;top:221px;width:48px;height:1px;background:#111;"></div>
<div class="a pv" style="left:1286px;top:212px">ByLayer</div>
<div class="a" style="left:1146px;top:229px;width:83px;height:18px;border:1px solid #a8a8a8;background:#f0f0f0"></div>
<div class="a" style="left:1228px;top:229px;width:119px;height:18px;border:1px solid #a8a8a8;background:#fff"></div>
<div class="a pk" style="left:1151px;top:229px">线型比例</div>
<div class="a pv" style="left:1230px;top:229px">1</div>
<div class="a" style="left:1146px;top:246px;width:83px;height:18px;border:1px solid #a8a8a8;background:#f0f0f0"></div>
<div class="a" style="left:1228px;top:246px;width:119px;height:18px;border:1px solid #a8a8a8;background:#fff"></div>
<div class="a pk" style="left:1151px;top:246px">线宽</div>
<div class="a" style="left:1234px;top:255px;width:48px;height:1px;background:#111;"></div>
<div class="a pv" style="left:1286px;top:246px">ByLayer</div>
<div class="a" style="left:1146px;top:263px;width:83px;height:18px;border:1px solid #a8a8a8;background:#f0f0f0"></div>
<div class="a" style="left:1228px;top:263px;width:119px;height:18px;border:1px solid #a8a8a8;background:#fff"></div>
<div class="a pk" style="left:1151px;top:263px">厚度</div>
<div class="a pv" style="left:1230px;top:263px">0</div>
<div class="a" style="left:1130px;top:288px;width:217px;height:17px;background:#363c46;border-radius:6px 6px 0 0"></div>
<div class="a" style="left:1137px;top:288px;font-size:13px;line-height:19px;font-weight:bold;color:#fff">打印样式</div>
<svg class="a" style="left:1328px;top:291px" width="12" height="12" viewBox="0 0 12 12"><path d="M1.5 6L6 2L10.5 6M1.5 10.5L6 6.5L10.5 10.5" stroke="#fff" stroke-width="1.5" fill="none"/></svg>
<div class="a" style="left:1146px;top:305px;width:83px;height:18px;border:1px solid #a8a8a8;background:#f0f0f0"></div>
<div class="a" style="left:1228px;top:305px;width:119px;height:18px;border:1px solid #a8a8a8;background:#f0f0f0"></div>
<div class="a pk" style="left:1151px;top:305px">打印样式</div>
<div class="a pv" style="left:1230px;top:305px">ByColor</div>
<div class="a" style="left:1146px;top:322px;width:83px;height:18px;border:1px solid #a8a8a8;background:#f0f0f0"></div>
<div class="a" style="left:1228px;top:322px;width:119px;height:18px;border:1px solid #a8a8a8;background:#fff"></div>
<div class="a pk" style="left:1151px;top:322px">打印样式表</div>
<div class="a pv" style="left:1230px;top:322px">无</div>
<div class="a" style="left:1146px;top:339px;width:83px;height:18px;border:1px solid #a8a8a8;background:#f0f0f0"></div>
<div class="a" style="left:1228px;top:339px;width:119px;height:18px;border:1px solid #a8a8a8;background:#f0f0f0"></div>
<div class="a pk" style="left:1151px;top:339px">打印表附着到</div>
<div class="a pv" style="left:1230px;top:339px">模型空间</div>
<div class="a" style="left:1146px;top:356px;width:83px;height:18px;border:1px solid #a8a8a8;background:#f0f0f0"></div>
<div class="a" style="left:1228px;top:356px;width:119px;height:18px;border:1px solid #a8a8a8;background:#f0f0f0"></div>
<div class="a pk" style="left:1151px;top:356px">打印表类型</div>
<div class="a pv" style="left:1230px;top:356px">不可用</div>
<div class="a" style="left:1130px;top:381px;width:217px;height:17px;background:#363c46;border-radius:6px 6px 0 0"></div>
<div class="a" style="left:1137px;top:381px;font-size:13px;line-height:19px;font-weight:bold;color:#fff">视图</div>
<svg class="a" style="left:1328px;top:384px" width="12" height="12" viewBox="0 0 12 12"><path d="M1.5 6L6 2L10.5 6M1.5 10.5L6 6.5L10.5 10.5" stroke="#fff" stroke-width="1.5" fill="none"/></svg>
<div class="a" style="left:1146px;top:398px;width:83px;height:18px;border:1px solid #a8a8a8;background:#f0f0f0"></div>
<div class="a" style="left:1228px;top:398px;width:119px;height:18px;border:1px solid #a8a8a8;background:#f0f0f0"></div>
<div class="a pk" style="left:1151px;top:398px">圆心X坐标</div>
<div class="a pv" style="left:1230px;top:398px">789.4538</div>
<div class="a" style="left:1146px;top:415px;width:83px;height:18px;border:1px solid #a8a8a8;background:#f0f0f0"></div>
<div class="a" style="left:1228px;top:415px;width:119px;height:18px;border:1px solid #a8a8a8;background:#f0f0f0"></div>
<div class="a pk" style="left:1151px;top:415px">圆心Y坐标</div>
<div class="a pv" style="left:1230px;top:415px">294.5989</div>
<div class="a" style="left:1146px;top:432px;width:83px;height:18px;border:1px solid #a8a8a8;background:#f0f0f0"></div>
<div class="a" style="left:1228px;top:432px;width:119px;height:18px;border:1px solid #a8a8a8;background:#f0f0f0"></div>
<div class="a pk" style="left:1151px;top:432px">圆心Z坐标</div>
<div class="a pv" style="left:1230px;top:432px">0</div>
<div class="a" style="left:1146px;top:449px;width:83px;height:18px;border:1px solid #a8a8a8;background:#f0f0f0"></div>
<div class="a" style="left:1228px;top:449px;width:119px;height:18px;border:1px solid #a8a8a8;background:#f0f0f0"></div>
<div class="a pk" style="left:1151px;top:449px">高度</div>
<div class="a pv" style="left:1230px;top:449px">959.705</div>
<div class="a" style="left:1146px;top:466px;width:83px;height:18px;border:1px solid #a8a8a8;background:#f0f0f0"></div>
<div class="a" style="left:1228px;top:466px;width:119px;height:18px;border:1px solid #a8a8a8;background:#f0f0f0"></div>
<div class="a pk" style="left:1151px;top:466px">宽度</div>
<div class="a pv" style="left:1230px;top:466px">1724.348</div>
<div class="a" style="left:1130px;top:491px;width:217px;height:17px;background:#363c46;border-radius:6px 6px 0 0"></div>
<div class="a" style="left:1137px;top:491px;font-size:13px;line-height:19px;font-weight:bold;color:#fff">其他</div>
<svg class="a" style="left:1328px;top:494px" width="12" height="12" viewBox="0 0 12 12"><path d="M1.5 6L6 2L10.5 6M1.5 10.5L6 6.5L10.5 10.5" stroke="#fff" stroke-width="1.5" fill="none"/></svg>
<div class="a" style="left:1146px;top:508px;width:83px;height:18px;border:1px solid #a8a8a8;background:#f0f0f0"></div>
<div class="a" style="left:1228px;top:508px;width:119px;height:18px;border:1px solid #a8a8a8;background:#fff"></div>
<div class="a pk" style="left:1151px;top:508px">打开 <span class=u>UCS</span> 图标</div>
<div class="a pv" style="left:1230px;top:508px">是</div>
<div class="a" style="left:1146px;top:525px;width:83px;height:18px;border:1px solid #a8a8a8;background:#f0f0f0"></div>
<div class="a" style="left:1228px;top:525px;width:119px;height:18px;border:1px solid #a8a8a8;background:#fff"></div>
<div class="a pk" style="left:1151px;top:525px">在原点显示 ...</div>
<div class="a pv" style="left:1230px;top:525px">是</div>
<div class="a" style="left:1146px;top:542px;width:83px;height:18px;border:1px solid #a8a8a8;background:#f0f0f0"></div>
<div class="a" style="left:1228px;top:542px;width:119px;height:18px;border:1px solid #a8a8a8;background:#fff"></div>
<div class="a pk" style="left:1151px;top:542px">显示<span class=u>UCS</span></div>
<div class="a pv" style="left:1230px;top:542px">是</div>
<div class="a" style="left:1146px;top:559px;width:83px;height:18px;border:1px solid #a8a8a8;background:#f0f0f0"></div>
<div class="a" style="left:1228px;top:559px;width:119px;height:18px;border:1px solid #a8a8a8;background:#f0f0f0"></div>
<div class="a pk" style="left:1151px;top:559px"><span class=u>UCS</span> 名称</div>
<div class="a pv" style="left:1230px;top:559px"></div>
<div class="a" style="left:1131px;top:597px;width:217px;height:33px;border:1px solid #a0a0a0;background:#f3f3f3"></div>
<div class="a" style="left:1168px;top:598px;width:80px;height:39px;background:#90cc58;"></div>
<div class="a" style="left:1168px;top:598px;width:40px;height:19px;background:#3aabd8;"></div>
<div class="a" style="left:1208px;top:598px;width:40px;height:17px;background:#78bf20;"></div>
<div class="a" style="left:1248px;top:598px;width:75px;height:39px;background:#f89c2c;"></div>
<div class="a cw" style="left:1176px;top:602px">CPU</div>
<div class="a cw" style="left:1216px;top:602px">内存</div>
<div class="a cw" style="left:1176px;top:619px">51%</div>
<div class="a cw" style="left:1216px;top:619px">55%</div>
<svg class="a" style="left:1251px;top:602px" width="10" height="13" viewBox="0 0 10 13"><path d="M5 13V5" stroke="#fff" stroke-width="2.5"/><path d="M0.5 6L5 0.5L9.5 6z" fill="#fff"/></svg>
<svg class="a" style="left:1251px;top:620px" width="10" height="13" viewBox="0 0 10 13"><path d="M5 0V8" stroke="#fff" stroke-width="2.5"/><path d="M0.5 7L5 12.5L9.5 7z" fill="#fff"/></svg>
<div class="a cw" style="left:1260px;top:602px;width:58px;text-align:right">0 K/S</div>
<div class="a cw" style="left:1260px;top:619px;width:58px;text-align:right">284 K/S</div>
</body></html>
